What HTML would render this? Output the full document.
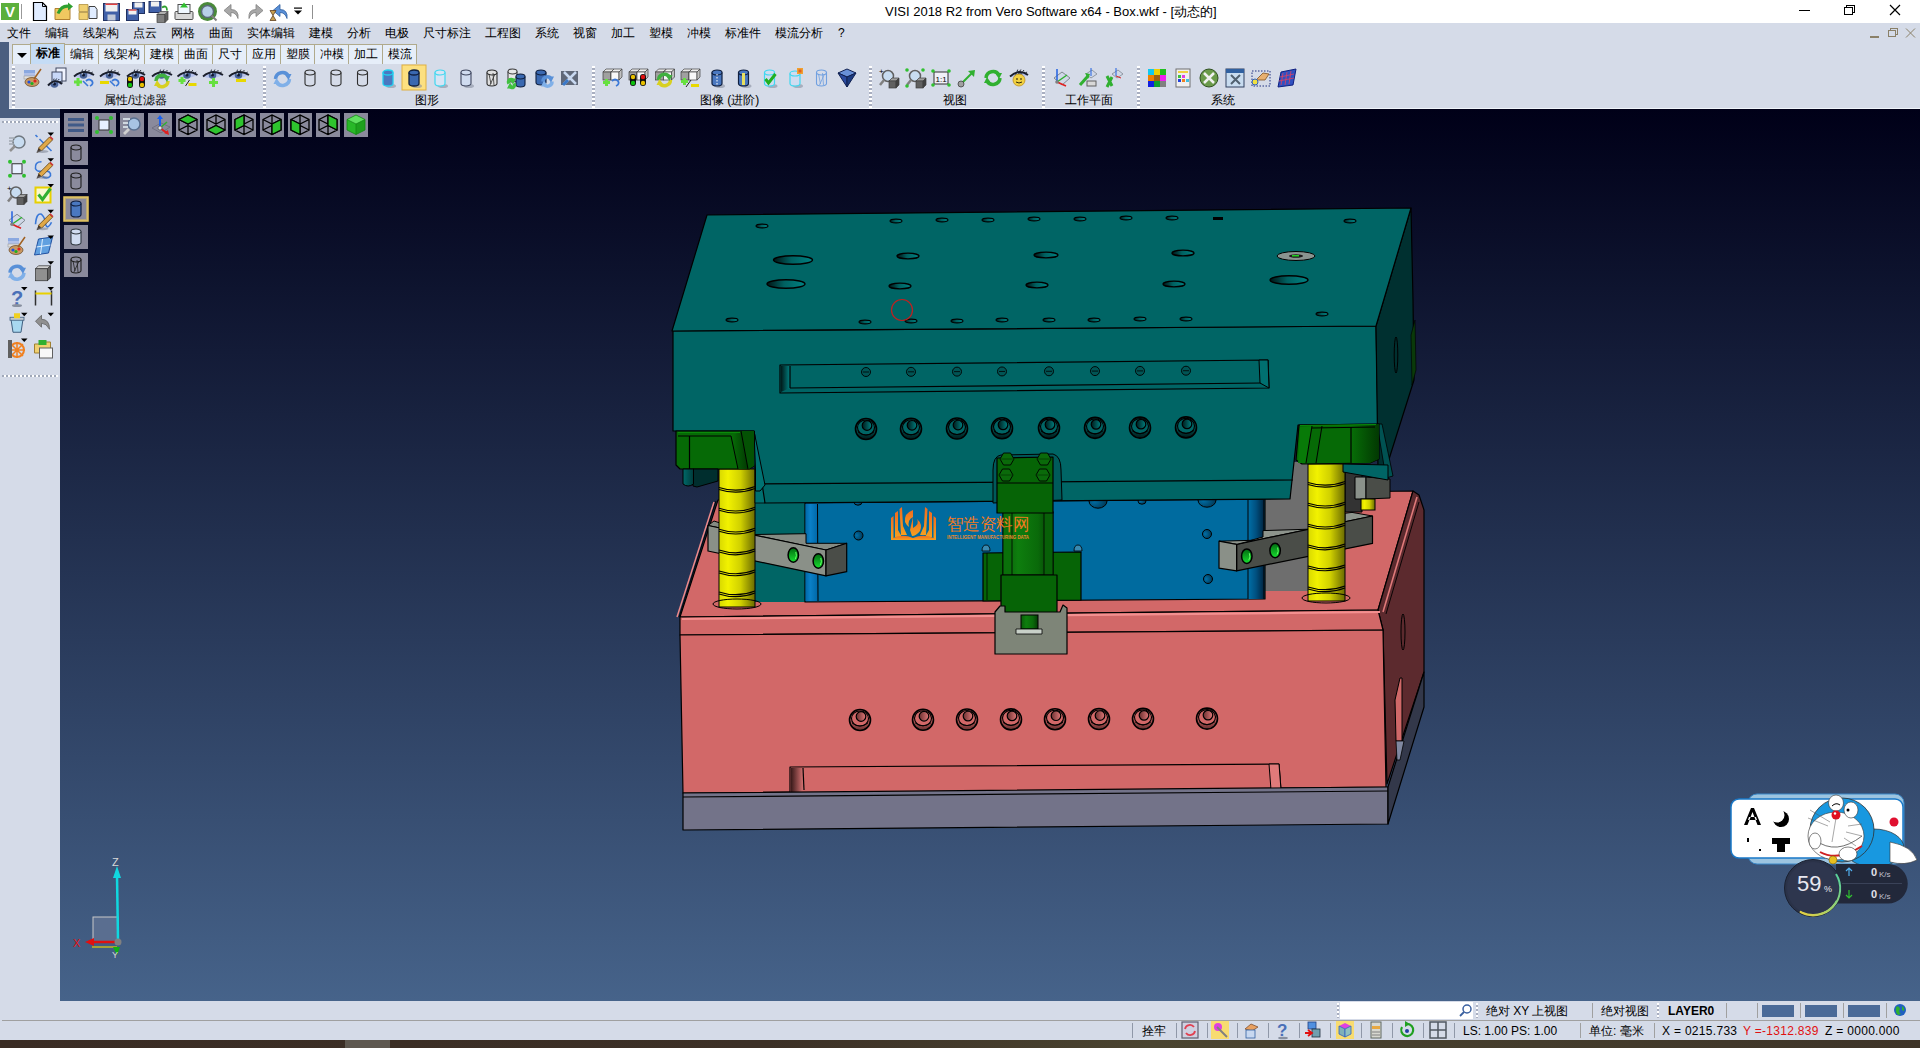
<!DOCTYPE html>
<html><head><meta charset="utf-8">
<style>
*{margin:0;padding:0;box-sizing:border-box}
html,body{width:1920px;height:1048px;overflow:hidden;background:#D5DBE8;font-family:"Liberation Sans",sans-serif;font-size:12px;color:#000}
.a{position:absolute}
#title{left:0;top:0;width:1920px;height:23px;background:#fff}
#ttl{position:absolute;left:885px;top:4px;font-size:13px;line-height:15px;white-space:nowrap;color:#000}
.mi{position:absolute;top:25.5px;font-size:12px;line-height:15px;white-space:nowrap}
.tab{position:absolute;top:44px;height:20px;background:#E6EEF9;border:1px solid #B0AA8C;border-bottom:none;font-size:12px;line-height:18px;text-align:center;white-space:nowrap}
#vp{left:60px;top:109px;width:1860px;height:892px;background:linear-gradient(#000018,#46638A)}
.lbl{position:absolute;top:93px;font-size:12px;line-height:15px;white-space:nowrap}
.sep{position:absolute;top:66px;width:3px;height:42px;background-image:repeating-linear-gradient(#fff 0 2px,#A8AEC0 2px 4px)}
.vb{position:absolute;width:24px;height:24px;background:#85859A}
.st{position:absolute;font-size:12px;line-height:14px;white-space:nowrap}
svg{position:absolute;left:0;top:0}
</style></head><body>
<div id="title" class="a">
 <div class="a" style="left:1px;top:3px;width:18px;height:17px;background:#5CB03C;color:#fff;font-weight:bold;font-size:15px;line-height:17px;text-align:center">V</div>
 <div class="a" style="left:21px;top:4px;width:1px;height:15px;background:#999"></div>
 <div id="ttl">VISI 2018 R2 from Vero Software x64 - Box.wkf - [动态的]</div>
 <div class="a" style="left:1799px;top:10px;width:11px;height:1px;background:#000"></div>
 <div class="a" style="left:1846px;top:5px;width:9px;height:8px;border:1px solid #000;background:#fff"></div>
 <div class="a" style="left:1844px;top:7px;width:9px;height:8px;border:1px solid #000;background:#fff"></div>
 <svg class="a" style="left:1889px;top:4px" width="12" height="12"><path d="M1,1 L11,11 M11,1 L1,11" stroke="#000" stroke-width="1.2"/></svg>
</div>
<div class="mi" style="left:7px">文件</div>
<div class="mi" style="left:45px">编辑</div>
<div class="mi" style="left:83px">线架构</div>
<div class="mi" style="left:133px">点云</div>
<div class="mi" style="left:171px">网格</div>
<div class="mi" style="left:209px">曲面</div>
<div class="mi" style="left:247px">实体编辑</div>
<div class="mi" style="left:309px">建模</div>
<div class="mi" style="left:347px">分析</div>
<div class="mi" style="left:385px">电极</div>
<div class="mi" style="left:423px">尺寸标注</div>
<div class="mi" style="left:485px">工程图</div>
<div class="mi" style="left:535px">系统</div>
<div class="mi" style="left:573px">视窗</div>
<div class="mi" style="left:611px">加工</div>
<div class="mi" style="left:649px">塑模</div>
<div class="mi" style="left:687px">冲模</div>
<div class="mi" style="left:725px">标准件</div>
<div class="mi" style="left:775px">模流分析</div>
<div class="mi" style="left:838px">?</div>
<div class="a" style="left:1870px;top:36px;width:9px;height:1.5px;background:#8A8068"></div>
<div class="a" style="left:1890px;top:28px;width:8px;height:7px;border:1px solid #8A8068"></div>
<div class="a" style="left:1888px;top:30px;width:8px;height:7px;border:1px solid #8A8068;background:#D5DBE8"></div>
<svg class="a" style="left:1905px;top:28px" width="11" height="10"><path d="M1,0.5 L10,9.5 M10,0.5 L1,9.5" stroke="#8A8068" stroke-width="1"/></svg>

<div class="a" style="left:0;top:42px;width:9px;height:76px;background:#4A5E80"></div><div class="a" style="left:0;top:109px;width:60px;height:9px;background:#4A5E80"></div>
<div class="tab" style="left:12px;width:19px"><div class="a" style="left:4px;top:8px;width:0;height:0;border-left:5px solid transparent;border-right:5px solid transparent;border-top:5px solid #000"></div></div>
<div class="tab" style="left:30px;width:35px;top:43px;height:21px;background:#C5DCF5;font-weight:bold">标准</div>
<div class="tab" style="left:64px;width:35px">编辑</div>
<div class="tab" style="left:98px;width:47px">线架构</div>
<div class="tab" style="left:144px;width:35px">建模</div>
<div class="tab" style="left:178px;width:35px">曲面</div>
<div class="tab" style="left:212px;width:35px">尺寸</div>
<div class="tab" style="left:246px;width:35px">应用</div>
<div class="tab" style="left:280px;width:35px">塑膜</div>
<div class="tab" style="left:314px;width:35px">冲模</div>
<div class="tab" style="left:348px;width:35px">加工</div>
<div class="tab" style="left:382px;width:35px">模流</div>
<div class="a" style="left:9px;top:64px;width:1911px;height:45px;background:#D5DBE8;border-bottom:1px solid #F0F4FA"></div>
<div class="sep" style="left:12px"></div>
<div class="sep" style="left:263px"></div>
<div class="sep" style="left:592px"></div>
<div class="sep" style="left:869px"></div>
<div class="sep" style="left:1042px"></div>
<div class="sep" style="left:1137px"></div>
<div class="lbl" style="left:104px">属性/过滤器</div>
<div class="lbl" style="left:415px">图形</div>
<div class="lbl" style="left:700px">图像 (进阶)</div>
<div class="lbl" style="left:943px">视图</div>
<div class="lbl" style="left:1065px">工作平面</div>
<div class="lbl" style="left:1211px">系统</div>
<div id="vp" class="a"></div>
<!--ICONS-->
<svg width="1920" height="1048" viewBox="0 0 1920 1048">
<defs><linearGradient id="yel" x1="0" x2="1"><stop offset="0" stop-color="#D8D800"/><stop offset="0.25" stop-color="#F2F200"/><stop offset="0.6" stop-color="#D0D000"/><stop offset="1" stop-color="#6A6A00"/></linearGradient><linearGradient id="grn" x1="0" x2="1"><stop offset="0" stop-color="#0A5A0A"/><stop offset="0.3" stop-color="#0E7E0E"/><stop offset="0.7" stop-color="#0A6A0A"/><stop offset="1" stop-color="#053A05"/></linearGradient><linearGradient id="wallT" x1="0" x2="1"><stop offset="0" stop-color="#001A1A"/><stop offset="1" stop-color="#008080"/></linearGradient><linearGradient id="wallP" x1="0" x2="1"><stop offset="0" stop-color="#3A1A1A"/><stop offset="1" stop-color="#E07878"/></linearGradient><linearGradient id="blueL" x1="0" x2="1"><stop offset="0" stop-color="#0068A8"/><stop offset="0.4" stop-color="#0A80C8"/><stop offset="1" stop-color="#0068A8"/></linearGradient><linearGradient id="blueR" x1="0" x2="1"><stop offset="0" stop-color="#0070A8"/><stop offset="0.5" stop-color="#005080"/><stop offset="1" stop-color="#002440"/></linearGradient><radialGradient id="bhole" cx="0.3" cy="0.5" r="0.8"><stop offset="0" stop-color="#0070A8"/><stop offset="1" stop-color="#00304A"/></radialGradient><linearGradient id="holeT" x1="0" x2="1"><stop offset="0" stop-color="#001414"/><stop offset="0.45" stop-color="#006060"/><stop offset="1" stop-color="#008282"/></linearGradient><pattern id="dots" width="4" height="2" patternUnits="userSpaceOnUse"><rect width="2" height="2" fill="#fff"/><rect x="2" width="2" height="2" fill="#A0A8B8"/></pattern><linearGradient id="gauge" x1="1" y1="0" x2="0" y2="1"><stop offset="0" stop-color="#50D0A0"/><stop offset="1" stop-color="#E8D040"/></linearGradient></defs>
<polygon points="718,500 1413,491 1378,610 680,617" fill="#D26868" stroke="#000" stroke-width="1.2" stroke-linejoin="round" />
<line x1="714" y1="502" x2="677" y2="617" stroke="#F08A8A" stroke-width="1.5"/>
<line x1="716" y1="501" x2="679" y2="617" stroke="#000" stroke-width="0.9"/>
<polygon points="1378,610 1413,491 1419,495 1424,510 1424,672 1387,784 1383,630" fill="#5C2A2E" stroke="#000" stroke-width="1.2" stroke-linejoin="round" />
<line x1="1383" y1="612" x2="1417" y2="497" stroke="#E07A7A" stroke-width="1.6"/>
<line x1="1386" y1="614" x2="1419" y2="502" stroke="#000" stroke-width="0.9"/>
<polygon points="1264,462 1345,462 1345,591 1264,591" fill="#6E6E6E" stroke="none" stroke-width="1.2" stroke-linejoin="round" />
<polygon points="1345,472 1362,472 1362,512 1345,512" fill="#333333" stroke="#000" stroke-width="1" stroke-linejoin="round" />
<polygon points="1355,477 1366,477 1366,499 1355,499" fill="#8A918A" stroke="#000" stroke-width="1" stroke-linejoin="round" />
<polygon points="1366,477 1390,479 1390,498 1366,499" fill="#4A4D48" stroke="#000" stroke-width="1" stroke-linejoin="round" />
<rect x="1361" y="499" width="14" height="11" fill="url(#yel)" stroke="#000" stroke-width="1"/>
<polygon points="745,500 810,500 810,602 745,602" fill="#006565" stroke="none" stroke-width="1.2" stroke-linejoin="round" />
<polygon points="805,503 1265,499 1265,599 805,602" fill="#006B9F" stroke="#000" stroke-width="1.2" stroke-linejoin="round" />
<rect x="805.5" y="504" width="12" height="97" fill="url(#blueL)"/>
<line x1="817.5" y1="504" x2="818" y2="601" stroke="#000" stroke-width="1"/>
<rect x="1248" y="500" width="16" height="99" fill="url(#blueR)"/>
<line x1="1248" y1="500" x2="1248" y2="599" stroke="#000" stroke-width="1"/>
<line x1="1264" y1="500" x2="1264" y2="599" stroke="#000" stroke-width="1"/>
<circle cx="858.5" cy="535.5" r="4.5" fill="url(#bhole)" stroke="#000" stroke-width="1"/>
<circle cx="1207" cy="534" r="4.5" fill="url(#bhole)" stroke="#000" stroke-width="1"/>
<circle cx="1208" cy="579" r="4.5" fill="url(#bhole)" stroke="#000" stroke-width="1"/>
<ellipse cx="858" cy="502" rx="4" ry="3.2" fill="url(#bhole)" stroke="#000" stroke-width="1"/>
<ellipse cx="1098" cy="501" rx="9" ry="7.2" fill="url(#bhole)" stroke="#000" stroke-width="1"/>
<ellipse cx="1142" cy="501" rx="4" ry="3.2" fill="url(#bhole)" stroke="#000" stroke-width="1"/>
<ellipse cx="1207" cy="500" rx="9" ry="7.2" fill="url(#bhole)" stroke="#000" stroke-width="1"/>
<polygon points="680,617 1378,610 1383,630 680,635" fill="#D26868" stroke="#000" stroke-width="1.2" stroke-linejoin="round" />
<line x1="682" y1="619" x2="1380" y2="612" stroke="#F49090" stroke-width="2.2"/>
<polygon points="680,635 1383,630 1386,787 683,793" fill="#D26868" stroke="#000" stroke-width="1.2" stroke-linejoin="round" />
<polygon points="790,767 1279,764 1281,790 790,796" fill="#D26868" stroke="#000" stroke-width="1.2" stroke-linejoin="round" />
<polygon points="791,768 803,768 804,790 791,795" fill="url(#wallP)"/>
<line x1="803" y1="768" x2="804" y2="790" stroke="#000" stroke-width="1.2"/>
<polygon points="1269,764 1279,764 1281,790 1271,790" fill="#E07A7A" stroke="#000" stroke-width="1" stroke-linejoin="round" />
<polygon points="683,793 1386,787 1388,787 1388,824 683,830" fill="#737389" stroke="#000" stroke-width="1.2" stroke-linejoin="round" />
<line x1="683" y1="797" x2="1388" y2="791" stroke="#000" stroke-width="1.2"/>
<polygon points="1388,787 1424,672 1424,707 1388,824" fill="#33384A" stroke="#000" stroke-width="1.2" stroke-linejoin="round" />
<polygon points="1395,700 1400,678 1402,678 1402,741 1396,741" fill="#D06868" stroke="#000" stroke-width="1" stroke-linejoin="round" />
<polygon points="1396,741 1404,741 1400,760 1397,760" fill="#8088A0" stroke="#000" stroke-width="0.8" stroke-linejoin="round" />
<ellipse cx="1403" cy="632" rx="2" ry="18" fill="none" stroke="#000" stroke-width="1"/>
<linearGradient id="scrPv" x1="0" y1="0" x2="0" y2="1"><stop offset="0.35" stop-color="#D26868"/><stop offset="1" stop-color="#6A3030"/></linearGradient><linearGradient id="scrPh" x1="0" x2="1"><stop offset="0" stop-color="#6A3030"/><stop offset="1" stop-color="#E07878"/></linearGradient><linearGradient id="scrTv" x1="0" y1="0" x2="0" y2="1"><stop offset="0.35" stop-color="#006464"/><stop offset="1" stop-color="#001A1A"/></linearGradient><linearGradient id="scrTh" x1="0" x2="1"><stop offset="0" stop-color="#001A1A"/><stop offset="1" stop-color="#008080"/></linearGradient>
<circle cx="860" cy="720.0" r="10.5" fill="url(#scrPv)" stroke="#000" stroke-width="1.6"/>
<ellipse cx="860" cy="718.5" rx="8.5" ry="7.5" fill="#D26868" stroke="#000" stroke-width="1.1"/>
<path d="M852,723.0 Q860,729.0 868,723.0" fill="none" stroke="#000" stroke-width="0.9"/>
<circle cx="861" cy="716.5" r="4.8" fill="url(#scrPh)" stroke="#000" stroke-width="1.2"/>
<circle cx="923" cy="719.748" r="10.5" fill="url(#scrPv)" stroke="#000" stroke-width="1.6"/>
<ellipse cx="923" cy="718.248" rx="8.5" ry="7.5" fill="#D26868" stroke="#000" stroke-width="1.1"/>
<path d="M915,722.748 Q923,728.748 931,722.748" fill="none" stroke="#000" stroke-width="0.9"/>
<circle cx="924" cy="716.248" r="4.8" fill="url(#scrPh)" stroke="#000" stroke-width="1.2"/>
<circle cx="967" cy="719.572" r="10.5" fill="url(#scrPv)" stroke="#000" stroke-width="1.6"/>
<ellipse cx="967" cy="718.072" rx="8.5" ry="7.5" fill="#D26868" stroke="#000" stroke-width="1.1"/>
<path d="M959,722.572 Q967,728.572 975,722.572" fill="none" stroke="#000" stroke-width="0.9"/>
<circle cx="968" cy="716.072" r="4.8" fill="url(#scrPh)" stroke="#000" stroke-width="1.2"/>
<circle cx="1011" cy="719.396" r="10.5" fill="url(#scrPv)" stroke="#000" stroke-width="1.6"/>
<ellipse cx="1011" cy="717.896" rx="8.5" ry="7.5" fill="#D26868" stroke="#000" stroke-width="1.1"/>
<path d="M1003,722.396 Q1011,728.396 1019,722.396" fill="none" stroke="#000" stroke-width="0.9"/>
<circle cx="1012" cy="715.896" r="4.8" fill="url(#scrPh)" stroke="#000" stroke-width="1.2"/>
<circle cx="1055" cy="719.22" r="10.5" fill="url(#scrPv)" stroke="#000" stroke-width="1.6"/>
<ellipse cx="1055" cy="717.72" rx="8.5" ry="7.5" fill="#D26868" stroke="#000" stroke-width="1.1"/>
<path d="M1047,722.22 Q1055,728.22 1063,722.22" fill="none" stroke="#000" stroke-width="0.9"/>
<circle cx="1056" cy="715.72" r="4.8" fill="url(#scrPh)" stroke="#000" stroke-width="1.2"/>
<circle cx="1099" cy="719.044" r="10.5" fill="url(#scrPv)" stroke="#000" stroke-width="1.6"/>
<ellipse cx="1099" cy="717.544" rx="8.5" ry="7.5" fill="#D26868" stroke="#000" stroke-width="1.1"/>
<path d="M1091,722.044 Q1099,728.044 1107,722.044" fill="none" stroke="#000" stroke-width="0.9"/>
<circle cx="1100" cy="715.544" r="4.8" fill="url(#scrPh)" stroke="#000" stroke-width="1.2"/>
<circle cx="1143" cy="718.868" r="10.5" fill="url(#scrPv)" stroke="#000" stroke-width="1.6"/>
<ellipse cx="1143" cy="717.368" rx="8.5" ry="7.5" fill="#D26868" stroke="#000" stroke-width="1.1"/>
<path d="M1135,721.868 Q1143,727.868 1151,721.868" fill="none" stroke="#000" stroke-width="0.9"/>
<circle cx="1144" cy="715.368" r="4.8" fill="url(#scrPh)" stroke="#000" stroke-width="1.2"/>
<circle cx="1207" cy="718.612" r="10.5" fill="url(#scrPv)" stroke="#000" stroke-width="1.6"/>
<ellipse cx="1207" cy="717.112" rx="8.5" ry="7.5" fill="#D26868" stroke="#000" stroke-width="1.1"/>
<path d="M1199,721.612 Q1207,727.612 1215,721.612" fill="none" stroke="#000" stroke-width="0.9"/>
<circle cx="1208" cy="715.112" r="4.8" fill="url(#scrPh)" stroke="#000" stroke-width="1.2"/>
<linearGradient id="ghole" x1="0" y1="0" x2="0" y2="1"><stop offset="0" stop-color="#006A10"/><stop offset="1" stop-color="#18E030"/></linearGradient>
<polygon points="708,525.5 714,521 755,534.5 806,533.7 806,543.3 846.7,543.3 826,550" fill="#858B83" stroke="#000" stroke-width="1" stroke-linejoin="round" />
<polygon points="708,525.5 826,550 826,575.8 708,551" fill="#8A9088" stroke="#000" stroke-width="1.2" stroke-linejoin="round" />
<polygon points="826,550 846.7,543.3 846.7,571.7 826,575.8" fill="#4A4D48" stroke="#000" stroke-width="1.2" stroke-linejoin="round" />
<ellipse cx="793.3" cy="555" rx="5.2" ry="7.3" fill="url(#ghole)" stroke="#000" stroke-width="1.5"/>
<path d="M795.8,552 Q797.3,556 795.3,559" fill="none" stroke="#60FF60" stroke-width="1"/>
<ellipse cx="818.3" cy="561" rx="5.2" ry="7.3" fill="url(#ghole)" stroke="#000" stroke-width="1.5"/>
<path d="M820.8,558 Q822.3,562 820.3,565" fill="none" stroke="#60FF60" stroke-width="1"/>
<polygon points="1236.6,544.3 1263,537 1263,530.6 1309,529.2 1345,520.8 1345,513.3 1352,512.4 1372.5,516" fill="#8D948C" stroke="#000" stroke-width="1" stroke-linejoin="round" />
<polygon points="1236.6,544.3 1372.5,516 1372.5,543.4 1236.6,570.9" fill="#4A4D48" stroke="#000" stroke-width="1.2" stroke-linejoin="round" />
<polygon points="1219,541.2 1253,540.3 1236.6,544.3" fill="#8D948C" stroke="#000" stroke-width="1" stroke-linejoin="round" />
<polygon points="1219,541.2 1236.6,544.3 1236.6,570.9 1219,568.2" fill="#8A9088" stroke="#000" stroke-width="1.2" stroke-linejoin="round" />
<ellipse cx="1246.8" cy="556.2" rx="5.2" ry="7.3" fill="url(#ghole)" stroke="#000" stroke-width="1.5"/>
<path d="M1249.3,553.2 Q1250.8,557.2 1248.8,560.2" fill="none" stroke="#60FF60" stroke-width="1"/>
<ellipse cx="1275.1" cy="550.5" rx="5.2" ry="7.3" fill="url(#ghole)" stroke="#000" stroke-width="1.5"/>
<path d="M1277.6,547.5 Q1279.1,551.5 1277.1,554.5" fill="none" stroke="#60FF60" stroke-width="1"/>
<rect x="719" y="469" width="36" height="138" fill="url(#yel)" stroke="#000" stroke-width="1"/>
<path d="M719,487.4 Q737.0,493.4 755,486.4" fill="none" stroke="#000" stroke-width="1.1"/>
<path d="M719,489.4 Q737.0,495.4 755,488.4" fill="none" stroke="#000" stroke-width="1.1"/>
<path d="M719,508.3 Q737.0,514.3 755,507.3" fill="none" stroke="#000" stroke-width="1.1"/>
<path d="M719,510.3 Q737.0,516.3 755,509.3" fill="none" stroke="#000" stroke-width="1.1"/>
<path d="M719,529.2 Q737.0,535.2 755,528.2" fill="none" stroke="#000" stroke-width="1.1"/>
<path d="M719,531.2 Q737.0,537.2 755,530.2" fill="none" stroke="#000" stroke-width="1.1"/>
<path d="M719,550.1 Q737.0,556.1 755,549.1" fill="none" stroke="#000" stroke-width="1.1"/>
<path d="M719,552.1 Q737.0,558.1 755,551.1" fill="none" stroke="#000" stroke-width="1.1"/>
<path d="M719,571.0 Q737.0,577.0 755,570.0" fill="none" stroke="#000" stroke-width="1.1"/>
<path d="M719,573.0 Q737.0,579.0 755,572.0" fill="none" stroke="#000" stroke-width="1.1"/>
<path d="M719,591.9 Q737.0,597.9 755,590.9" fill="none" stroke="#000" stroke-width="1.1"/>
<path d="M719,593.9 Q737.0,599.9 755,592.9" fill="none" stroke="#000" stroke-width="1.1"/>
<rect x="1308" y="464" width="37" height="137" fill="url(#yel)" stroke="#000" stroke-width="1"/>
<path d="M1308,482.4 Q1326.5,488.4 1345,481.4" fill="none" stroke="#000" stroke-width="1.1"/>
<path d="M1308,484.4 Q1326.5,490.4 1345,483.4" fill="none" stroke="#000" stroke-width="1.1"/>
<path d="M1308,503.3 Q1326.5,509.3 1345,502.3" fill="none" stroke="#000" stroke-width="1.1"/>
<path d="M1308,505.3 Q1326.5,511.3 1345,504.3" fill="none" stroke="#000" stroke-width="1.1"/>
<path d="M1308,524.2 Q1326.5,530.2 1345,523.2" fill="none" stroke="#000" stroke-width="1.1"/>
<path d="M1308,526.2 Q1326.5,532.2 1345,525.2" fill="none" stroke="#000" stroke-width="1.1"/>
<path d="M1308,545.1 Q1326.5,551.1 1345,544.1" fill="none" stroke="#000" stroke-width="1.1"/>
<path d="M1308,547.1 Q1326.5,553.1 1345,546.1" fill="none" stroke="#000" stroke-width="1.1"/>
<path d="M1308,566.0 Q1326.5,572.0 1345,565.0" fill="none" stroke="#000" stroke-width="1.1"/>
<path d="M1308,568.0 Q1326.5,574.0 1345,567.0" fill="none" stroke="#000" stroke-width="1.1"/>
<path d="M1308,586.9 Q1326.5,592.9 1345,585.9" fill="none" stroke="#000" stroke-width="1.1"/>
<path d="M1308,588.9 Q1326.5,594.9 1345,587.9" fill="none" stroke="#000" stroke-width="1.1"/>
<ellipse cx="737" cy="604" rx="24" ry="5" fill="none" stroke="#000" stroke-width="1"/>
<ellipse cx="1326" cy="598" rx="24" ry="5" fill="none" stroke="#000" stroke-width="1"/>
<polygon points="745,431 757,431 766,484 765,503 755,503 755,469" fill="#007070" stroke="#000" stroke-width="0.8" stroke-linejoin="round" />
<polygon points="673,331 1376,326 1378,424 1298,425 1290,499 765,503 754,431 673,431" fill="#006565" stroke="#000" stroke-width="1.2" stroke-linejoin="round" />
<line x1="758" y1="484" x2="1293" y2="480" stroke="#000" stroke-width="1.2"/>
<polygon points="1376,326 1411,208 1413,300 1414,380 1384,475 1378,470" fill="#003030" stroke="#000" stroke-width="1.2" stroke-linejoin="round" />
<polygon points="707,215 1411,208 1376,326 672,331" fill="#006565" stroke="#000" stroke-width="1.2" stroke-linejoin="round" />
<ellipse cx="1396" cy="355" rx="1.8" ry="18" fill="none" stroke="#000" stroke-width="1"/>
<polygon points="1411,335 1415,320 1416,370 1412,385" fill="#0A3A0A" stroke="#000" stroke-width="0.6" stroke-linejoin="round" />
<polygon points="1377,424 1382,424 1393,476 1386,478" fill="#005252" stroke="#000" stroke-width="0.8" stroke-linejoin="round" />
<polygon points="780,365 1268,360 1269,388 780,393" fill="#006565" stroke="#000" stroke-width="1.2" stroke-linejoin="round" />
<polygon points="781,366 790,366 790,388 781,392" fill="url(#wallT)"/>
<line x1="790" y1="366" x2="790" y2="388" stroke="#000" stroke-width="1.2"/>
<line x1="790" y1="388" x2="1262" y2="383" stroke="#000" stroke-width="1.2"/>
<polygon points="1259,360 1268,360 1269,388 1260,383" fill="#007070" stroke="#000" stroke-width="1" stroke-linejoin="round" />
<circle cx="866" cy="372.0" r="4.5" fill="#005555" stroke="#000" stroke-width="0.9"/>
<line x1="863" y1="372.0" x2="869" y2="372.0" stroke="#000" stroke-width="0.8"/>
<circle cx="911" cy="371.82" r="4.5" fill="#005555" stroke="#000" stroke-width="0.9"/>
<line x1="908" y1="371.82" x2="914" y2="371.82" stroke="#000" stroke-width="0.8"/>
<circle cx="957" cy="371.636" r="4.5" fill="#005555" stroke="#000" stroke-width="0.9"/>
<line x1="954" y1="371.636" x2="960" y2="371.636" stroke="#000" stroke-width="0.8"/>
<circle cx="1002" cy="371.456" r="4.5" fill="#005555" stroke="#000" stroke-width="0.9"/>
<line x1="999" y1="371.456" x2="1005" y2="371.456" stroke="#000" stroke-width="0.8"/>
<circle cx="1049" cy="371.268" r="4.5" fill="#005555" stroke="#000" stroke-width="0.9"/>
<line x1="1046" y1="371.268" x2="1052" y2="371.268" stroke="#000" stroke-width="0.8"/>
<circle cx="1095" cy="371.084" r="4.5" fill="#005555" stroke="#000" stroke-width="0.9"/>
<line x1="1092" y1="371.084" x2="1098" y2="371.084" stroke="#000" stroke-width="0.8"/>
<circle cx="1140" cy="370.904" r="4.5" fill="#005555" stroke="#000" stroke-width="0.9"/>
<line x1="1137" y1="370.904" x2="1143" y2="370.904" stroke="#000" stroke-width="0.8"/>
<circle cx="1186" cy="370.72" r="4.5" fill="#005555" stroke="#000" stroke-width="0.9"/>
<line x1="1183" y1="370.72" x2="1189" y2="370.72" stroke="#000" stroke-width="0.8"/>
<circle cx="866" cy="429.0" r="10.5" fill="url(#scrTv)" stroke="#000" stroke-width="1.6"/>
<ellipse cx="866" cy="427.5" rx="8.5" ry="7.5" fill="#006565" stroke="#000" stroke-width="1.1"/>
<path d="M858,432.0 Q866,438.0 874,432.0" fill="none" stroke="#000" stroke-width="0.9"/>
<circle cx="867" cy="425.5" r="4.8" fill="url(#scrTh)" stroke="#000" stroke-width="1.2"/>
<circle cx="911" cy="428.775" r="10.5" fill="url(#scrTv)" stroke="#000" stroke-width="1.6"/>
<ellipse cx="911" cy="427.275" rx="8.5" ry="7.5" fill="#006565" stroke="#000" stroke-width="1.1"/>
<path d="M903,431.775 Q911,437.775 919,431.775" fill="none" stroke="#000" stroke-width="0.9"/>
<circle cx="912" cy="425.275" r="4.8" fill="url(#scrTh)" stroke="#000" stroke-width="1.2"/>
<circle cx="957" cy="428.545" r="10.5" fill="url(#scrTv)" stroke="#000" stroke-width="1.6"/>
<ellipse cx="957" cy="427.045" rx="8.5" ry="7.5" fill="#006565" stroke="#000" stroke-width="1.1"/>
<path d="M949,431.545 Q957,437.545 965,431.545" fill="none" stroke="#000" stroke-width="0.9"/>
<circle cx="958" cy="425.045" r="4.8" fill="url(#scrTh)" stroke="#000" stroke-width="1.2"/>
<circle cx="1002" cy="428.32" r="10.5" fill="url(#scrTv)" stroke="#000" stroke-width="1.6"/>
<ellipse cx="1002" cy="426.82" rx="8.5" ry="7.5" fill="#006565" stroke="#000" stroke-width="1.1"/>
<path d="M994,431.32 Q1002,437.32 1010,431.32" fill="none" stroke="#000" stroke-width="0.9"/>
<circle cx="1003" cy="424.82" r="4.8" fill="url(#scrTh)" stroke="#000" stroke-width="1.2"/>
<circle cx="1049" cy="428.085" r="10.5" fill="url(#scrTv)" stroke="#000" stroke-width="1.6"/>
<ellipse cx="1049" cy="426.585" rx="8.5" ry="7.5" fill="#006565" stroke="#000" stroke-width="1.1"/>
<path d="M1041,431.085 Q1049,437.085 1057,431.085" fill="none" stroke="#000" stroke-width="0.9"/>
<circle cx="1050" cy="424.585" r="4.8" fill="url(#scrTh)" stroke="#000" stroke-width="1.2"/>
<circle cx="1095" cy="427.855" r="10.5" fill="url(#scrTv)" stroke="#000" stroke-width="1.6"/>
<ellipse cx="1095" cy="426.355" rx="8.5" ry="7.5" fill="#006565" stroke="#000" stroke-width="1.1"/>
<path d="M1087,430.855 Q1095,436.855 1103,430.855" fill="none" stroke="#000" stroke-width="0.9"/>
<circle cx="1096" cy="424.355" r="4.8" fill="url(#scrTh)" stroke="#000" stroke-width="1.2"/>
<circle cx="1140" cy="427.63" r="10.5" fill="url(#scrTv)" stroke="#000" stroke-width="1.6"/>
<ellipse cx="1140" cy="426.13" rx="8.5" ry="7.5" fill="#006565" stroke="#000" stroke-width="1.1"/>
<path d="M1132,430.63 Q1140,436.63 1148,430.63" fill="none" stroke="#000" stroke-width="0.9"/>
<circle cx="1141" cy="424.13" r="4.8" fill="url(#scrTh)" stroke="#000" stroke-width="1.2"/>
<circle cx="1186" cy="427.4" r="10.5" fill="url(#scrTv)" stroke="#000" stroke-width="1.6"/>
<ellipse cx="1186" cy="425.9" rx="8.5" ry="7.5" fill="#006565" stroke="#000" stroke-width="1.1"/>
<path d="M1178,430.4 Q1186,436.4 1194,430.4" fill="none" stroke="#000" stroke-width="0.9"/>
<circle cx="1187" cy="423.9" r="4.8" fill="url(#scrTh)" stroke="#000" stroke-width="1.2"/>
<ellipse cx="762" cy="226" rx="6" ry="1.9" fill="url(#holeT)" stroke="#000" stroke-width="1.1"/>
<ellipse cx="896" cy="221" rx="6" ry="1.9" fill="url(#holeT)" stroke="#000" stroke-width="1.1"/>
<ellipse cx="942" cy="220" rx="6" ry="1.9" fill="url(#holeT)" stroke="#000" stroke-width="1.1"/>
<ellipse cx="988" cy="220" rx="6" ry="1.9" fill="url(#holeT)" stroke="#000" stroke-width="1.1"/>
<ellipse cx="1034" cy="219" rx="6" ry="1.9" fill="url(#holeT)" stroke="#000" stroke-width="1.1"/>
<ellipse cx="1080" cy="219" rx="6" ry="1.9" fill="url(#holeT)" stroke="#000" stroke-width="1.1"/>
<ellipse cx="1126" cy="218" rx="6" ry="1.9" fill="url(#holeT)" stroke="#000" stroke-width="1.1"/>
<ellipse cx="1172" cy="218" rx="6" ry="1.9" fill="url(#holeT)" stroke="#000" stroke-width="1.1"/>
<ellipse cx="1350" cy="221" rx="6" ry="1.9" fill="url(#holeT)" stroke="#000" stroke-width="1.1"/>
<ellipse cx="732" cy="320" rx="6" ry="1.9" fill="url(#holeT)" stroke="#000" stroke-width="1.1"/>
<ellipse cx="865" cy="322" rx="6" ry="1.9" fill="url(#holeT)" stroke="#000" stroke-width="1.1"/>
<ellipse cx="911" cy="321" rx="6" ry="1.9" fill="url(#holeT)" stroke="#000" stroke-width="1.1"/>
<ellipse cx="957" cy="321" rx="6" ry="1.9" fill="url(#holeT)" stroke="#000" stroke-width="1.1"/>
<ellipse cx="1002" cy="320" rx="6" ry="1.9" fill="url(#holeT)" stroke="#000" stroke-width="1.1"/>
<ellipse cx="1049" cy="320" rx="6" ry="1.9" fill="url(#holeT)" stroke="#000" stroke-width="1.1"/>
<ellipse cx="1094" cy="320" rx="6" ry="1.9" fill="url(#holeT)" stroke="#000" stroke-width="1.1"/>
<ellipse cx="1140" cy="319" rx="6" ry="1.9" fill="url(#holeT)" stroke="#000" stroke-width="1.1"/>
<ellipse cx="1186" cy="319" rx="6" ry="1.9" fill="url(#holeT)" stroke="#000" stroke-width="1.1"/>
<ellipse cx="1322" cy="314" rx="6" ry="1.9" fill="url(#holeT)" stroke="#000" stroke-width="1.1"/>
<rect x="1213" y="217" width="10" height="3" fill="#000"/>
<ellipse cx="793" cy="260" rx="19.5" ry="4.2" fill="url(#holeT)" stroke="#000" stroke-width="1.4"/>
<ellipse cx="786" cy="284" rx="19" ry="4.2" fill="url(#holeT)" stroke="#000" stroke-width="1.4"/>
<ellipse cx="908" cy="256" rx="11" ry="2.9" fill="url(#holeT)" stroke="#000" stroke-width="1.4"/>
<ellipse cx="900" cy="286" rx="11" ry="2.9" fill="url(#holeT)" stroke="#000" stroke-width="1.4"/>
<ellipse cx="1046" cy="255" rx="12" ry="2.9" fill="url(#holeT)" stroke="#000" stroke-width="1.4"/>
<ellipse cx="1037" cy="285" rx="11" ry="2.9" fill="url(#holeT)" stroke="#000" stroke-width="1.4"/>
<ellipse cx="1183" cy="253" rx="11" ry="2.9" fill="url(#holeT)" stroke="#000" stroke-width="1.4"/>
<ellipse cx="1174" cy="284" rx="11" ry="2.9" fill="url(#holeT)" stroke="#000" stroke-width="1.4"/>
<ellipse cx="1289" cy="280" rx="19" ry="4.2" fill="url(#holeT)" stroke="#000" stroke-width="1.4"/>
<ellipse cx="1296" cy="256" rx="19" ry="4.5" fill="#8A9490" stroke="#000" stroke-width="1"/>
<ellipse cx="1296" cy="256" rx="7" ry="1.8" fill="#1A1A1A"/><rect x="1292" y="255" width="7" height="1.5" fill="#20D020"/>
<circle cx="902" cy="310" r="10.5" fill="none" stroke="#C02020" stroke-width="1.2"/>
<linearGradient id="gdk" x1="0" x2="1"><stop offset="0" stop-color="#077007"/><stop offset="1" stop-color="#023802"/></linearGradient>
<polygon points="754,431 765,485 760,491 755.5,491 755.5,469" fill="#007272" stroke="#000" stroke-width="1" stroke-linejoin="round" />
<polygon points="676,431 754,431 754,466 749,469 680,469 676,465" fill="#066A06" stroke="#000" stroke-width="1.2" stroke-linejoin="round" />
<polygon points="731,436 741,431 748,469 738,469" fill="url(#gdk)"/>
<polygon points="741,431 754,431 754,466 749,469 748,469" fill="#045204"/>
<line x1="731" y1="436" x2="738" y2="469" stroke="#000" stroke-width="1"/>
<line x1="741" y1="431" x2="748" y2="469" stroke="#000" stroke-width="1"/>
<line x1="678" y1="436" x2="731" y2="436" stroke="#000" stroke-width="1"/>
<line x1="678" y1="432.5" x2="740" y2="432.5" stroke="#0A8A0A" stroke-width="1.2"/>
<line x1="689.5" y1="436" x2="689.5" y2="469" stroke="#000" stroke-width="1.2"/>
<polygon points="693,469 718,469 718,481 697,487 693,486" fill="#002E2E" stroke="#000" stroke-width="1" stroke-linejoin="round" />
<linearGradient id="tcy" x1="0" x2="1"><stop offset="0" stop-color="#006A6A"/><stop offset="1" stop-color="#003A3A"/></linearGradient>
<path d="M683,469 L693.5,469 L693.5,484 Q688,488 683,484Z" fill="url(#tcy)" stroke="#000" stroke-width="1"/>
<polygon points="1299,425 1379,424 1379,459 1370,463 1302,464 1296,460" fill="#066A06" stroke="#000" stroke-width="1.2" stroke-linejoin="round" />
<polygon points="1300,427 1312,426 1306,463 1298,463" fill="#087A08"/>
<line x1="1312" y1="426" x2="1306" y2="463" stroke="#000" stroke-width="1"/>
<line x1="1322" y1="426" x2="1316" y2="463" stroke="#000" stroke-width="1"/>
<polygon points="1350,425 1379,424 1379,459 1370,463 1350,463" fill="url(#gdk)"/>
<line x1="1351" y1="427" x2="1351" y2="463" stroke="#000" stroke-width="1.2"/>
<line x1="1312" y1="428" x2="1375" y2="427" stroke="#000" stroke-width="1"/>
<line x1="1300" y1="425.5" x2="1376" y2="424.5" stroke="#0A8A0A" stroke-width="1.2"/>
<polygon points="1343,464 1388,465 1388,480 1343,472" fill="#006565" stroke="#000" stroke-width="1" stroke-linejoin="round" />
<path d="M993,503 L993,470 Q993,456 1001,455 L1053,454 Q1061,456 1061,470 L1062,500 Z" fill="#005A5A" stroke="#000" stroke-width="1"/>
<polygon points="983,553 1081,552 1081,600 983,601" fill="#066406" stroke="#000" stroke-width="1.2" stroke-linejoin="round" />
<line x1="987" y1="553" x2="987" y2="600" stroke="#000" stroke-width="0.8"/>
<path d="M982,551 Q982,545 986,545 Q990,545 990,551Z" fill="#3A8AB0" stroke="#000" stroke-width="0.8"/>
<path d="M1074,551 Q1074,545 1078,545 Q1082,545 1082,551Z" fill="#3A8AB0" stroke="#000" stroke-width="0.8"/>
<rect x="1003" y="512" width="50" height="63" fill="url(#grn)" stroke="#000" stroke-width="1"/>
<rect x="1003" y="512" width="9" height="63" fill="#0A700A" stroke="#000" stroke-width="0.8"/>
<rect x="1044" y="512" width="9" height="63" fill="#086008" stroke="#000" stroke-width="0.8"/>
<polygon points="997,458 1053,457 1053,513 997,513" fill="#066406" stroke="#000" stroke-width="1.2" stroke-linejoin="round" />
<line x1="997" y1="483" x2="1053" y2="483" stroke="#000" stroke-width="1.2"/>
<polygon points="1000,459 1003.5,453 1010.5,453 1014,459 1010.5,465 1003.5,465" fill="#0A6A0A" stroke="#000" stroke-width="0.9"/>
<line x1="1000" y1="459" x2="1014" y2="459" stroke="#043A04" stroke-width="0.8"/>
<polygon points="1037,459 1040.5,453 1047.5,453 1051,459 1047.5,465 1040.5,465" fill="#0A6A0A" stroke="#000" stroke-width="0.9"/>
<line x1="1037" y1="459" x2="1051" y2="459" stroke="#043A04" stroke-width="0.8"/>
<polygon points="999,475 1002.5,469 1009.5,469 1013,475 1009.5,481 1002.5,481" fill="#0A6A0A" stroke="#000" stroke-width="0.9"/>
<line x1="999" y1="475" x2="1013" y2="475" stroke="#043A04" stroke-width="0.8"/>
<polygon points="1036,475 1039.5,469 1046.5,469 1050,475 1046.5,481 1039.5,481" fill="#0A6A0A" stroke="#000" stroke-width="0.9"/>
<line x1="1036" y1="475" x2="1050" y2="475" stroke="#043A04" stroke-width="0.8"/>
<polygon points="1001,575 1057,575 1057,615 1001,615" fill="#066406" stroke="#000" stroke-width="1.2" stroke-linejoin="round" />
<polygon points="995,612 1000,606 1005,606 1005,612 1060,612 1063,605 1067,608 1067,654 995,654" fill="#7E8578" stroke="#000" stroke-width="1.2" stroke-linejoin="round" />
<rect x="1021" y="615" width="17" height="14" fill="url(#grn)" stroke="#000" stroke-width="1"/>
<polygon points="1016,629 1042,629 1042,634 1016,634" fill="#C8D0C8" stroke="#000" stroke-width="0.8" stroke-linejoin="round" />
<defs><linearGradient id="og" x1="0" y1="0" x2="0" y2="1"><stop offset="0" stop-color="#F06A20"/><stop offset="1" stop-color="#F4A020"/></linearGradient></defs>
<g fill="url(#og)"><polygon points="891,518 893.5,516 893.5,539 891,539"/><polygon points="895,513 898,511 898,530 902,537 895,537"/><polygon points="899.5,509 902,507 903,526 907,535 901,535"/><polygon points="936,518 933.5,516 933.5,539 936,539"/><polygon points="932,513 929,511 929,530 925,537 932,537"/><polygon points="927.5,509 925,507 924,526 920,535 926,535"/><path d="M913,510 Q904,513 905,522 Q907,526 909,527 Q907,520 913,517Z"/><path d="M913,517 L913,528 Q920,524 917,519 Q923,524 920,531 Q916,536 912,536 L910,530Z"/><path d="M891,539 Q902,533 913,538 Q924,533 936,539 L936,540 L891,540Z"/></g><text x="946.5" y="529.5" font-size="17" textLength="83" lengthAdjust="spacingAndGlyphs" fill="#F07A22" font-family="Liberation Sans, sans-serif">智造资料网</text><text x="947" y="538.5" font-size="4.6" textLength="82" lengthAdjust="spacingAndGlyphs" fill="#E88A30" font-weight="bold" font-family="Liberation Sans, sans-serif">INTELLIGENT MANUFACTURING DATA</text>
<rect x="93" y="917" width="25" height="25" fill="#5A6E90" stroke="#C8C8C8" stroke-width="1"/><line x1="118" y1="940" x2="117" y2="875" stroke="#10D8E0" stroke-width="2.5"/><polygon points="113,878 121,878 117,866" fill="#10D8E0"/><line x1="117" y1="942" x2="92" y2="942" stroke="#E01010" stroke-width="2.5"/><polygon points="94,938 94,946 85,942" fill="#E01010"/><line x1="92" y1="947" x2="117" y2="947" stroke="#E8D000" stroke-width="1.2"/><circle cx="118" cy="942" r="3.5" fill="#808080"/><polygon points="113,947 120,947 117,955" fill="#10B010"/><text x="112" y="866" font-size="11" fill="#D8D8D8" font-family="Liberation Sans, sans-serif">Z</text><text x="73" y="947" font-size="11" fill="#E01010" font-family="Liberation Sans, sans-serif">X</text><text x="112" y="958" font-size="9" fill="#D8D8D8" font-family="Liberation Sans, sans-serif">Y</text><g transform="translate(29.5,1.5)"><path d="M4,1 L13,1 L17,5 L17,19 L4,19Z" fill="#E0ECFF" stroke="#000" stroke-width="1.2"/><path d="M13,1 L13,5 L17,5" fill="none" stroke="#000" stroke-width="1"/></g>
<g transform="translate(54,1.5)"><path d="M1,7 L7,7 L9,5 L16,5 L16,18 L1,18Z" fill="#F0C860" stroke="#B08030" stroke-width="1"/><path d="M4,12 Q8,3 16,5" fill="none" stroke="#30A030" stroke-width="3"/><polygon points="14,1 19,5 14,9" fill="#30A030"/></g>
<g transform="translate(78,1.5)"><path d="M1,3 L10,3 L10,10 L1,10Z" fill="#F0D070" stroke="#B09040" stroke-width="0.8"/><path d="M1,11 L10,11 L10,18 L1,18Z" fill="#F0D070" stroke="#B09040" stroke-width="0.8"/><path d="M11,5 L17,5 L19,8 L19,17 L11,17Z" fill="#E0ECFF" stroke="#404040" stroke-width="1"/></g>
<g transform="translate(101.5,1.5)"><rect x="2" y="2" width="16" height="17" fill="#4060A8" stroke="#203060" stroke-width="1"/><rect x="4" y="2" width="12" height="8" fill="#F0F0F0"/><rect x="4" y="2" width="12" height="1.5" fill="#E04040"/><rect x="6" y="13" width="8" height="6" fill="#C0C8D8"/></g>
<g transform="translate(125.5,1.5)"><rect x="7" y="1" width="12" height="11" fill="#4060A8" stroke="#203060" stroke-width="1"/><rect x="9" y="1" width="8" height="5" fill="#F0F0F0"/><rect x="1" y="8" width="12" height="11" fill="#4060A8" stroke="#203060" stroke-width="1"/><rect x="3" y="8" width="8" height="5" fill="#F0F0F0"/><rect x="3" y="8" width="8" height="1.2" fill="#E04040"/></g>
<g transform="translate(149,1.5)"><rect x="0" y="0" width="12" height="11" fill="#4060A8" stroke="#203060" stroke-width="1"/><rect x="2" y="0" width="8" height="5" fill="#F0F0F0"/><path d="M13,6 Q18,3 18,9" fill="none" stroke="#30A030" stroke-width="1.8"/><polygon points="8,13 11,10 19,10 16,13" fill="#B0B0B0" stroke="#404040" stroke-width="0.7"/><rect x="8" y="13" width="8" height="8" fill="#808080" stroke="#404040" stroke-width="0.7"/><polygon points="16,13 19,10 19,18 16,21" fill="#606060" stroke="#404040" stroke-width="0.7"/></g>
<g transform="translate(174,1.5)"><rect x="1" y="10" width="18" height="8" rx="1" fill="#D8D8D8" stroke="#505050" stroke-width="1"/><rect x="4" y="3" width="12" height="9" fill="#F0F8FF" stroke="#505050" stroke-width="1"/><polygon points="10,1 14,6 6,6" fill="#30C030"/></g>
<g transform="translate(197.5,1.5)"><circle cx="10" cy="10" r="9.5" fill="#4A8A3A"/><circle cx="10" cy="10" r="6" fill="#B8D0E8" stroke="#5A6A7A" stroke-width="1.5"/><line x1="14" y1="14" x2="19" y2="19" stroke="#808080" stroke-width="2"/></g>
<g transform="translate(222,1.5)"><path d="M16,17 Q17,8 9,8 L9,3 L2,9 L9,15 L9,11 Q14,11 16,17Z" fill="#A8A8A8" stroke="#808080" stroke-width="0.8"/></g>
<g transform="translate(245,1.5)"><path d="M4,17 Q3,8 11,8 L11,3 L18,9 L11,15 L11,11 Q6,11 4,17Z" fill="#A8A8A8" stroke="#808080" stroke-width="0.8"/></g>
<g transform="translate(269,1.5)"><path d="M18,17 Q19,8 11,8 L11,3 L4,9 L11,15 L11,11 Q16,11 18,17Z" fill="#5A90D8" stroke="#3060A0" stroke-width="0.8"/><path d="M1,9 L7,9 L4,14 L7,19 L1,19 L4,14Z" fill="#C8A050" stroke="#604020" stroke-width="0.8"/></g>
<g transform="translate(288,1.5)"><rect x="6" y="6" width="8" height="1.2" fill="#000"/><polygon points="6,9 14,9 10,13" fill="#000"/></g>
<rect x="312" y="5" width="1" height="14" fill="#909090"/>
<g transform="translate(23,68)"><rect x="1" y="2" width="11" height="3" fill="#8AA8E0"/><rect x="1" y="5" width="11" height="3" fill="#B0C0E8"/><rect x="1" y="8" width="11" height="3" fill="#E0E0E0" stroke="#909090" stroke-width="0.5"/><ellipse cx="9" cy="14" rx="7" ry="4.5" fill="#C89860" stroke="#705030" stroke-width="0.8"/><circle cx="6" cy="14" r="1.6" fill="#2050E0"/><circle cx="9" cy="15.5" r="1.6" fill="#20B020"/><circle cx="12" cy="13" r="1.6" fill="#E02020"/><line x1="11" y1="11" x2="18" y2="1" stroke="#A06020" stroke-width="1.5"/></g>
<g transform="translate(48,68)"><rect x="8" y="0" width="10" height="13" fill="#F0F4FF" stroke="#404860" stroke-width="1"/><rect x="4" y="4" width="10" height="11" fill="#C8D8F8" stroke="#404860" stroke-width="1"/><path d="M0,17.5 Q7.0,9.5 14,16 Q7.0,21.5 0,17.5Z" fill="#B8C4EC"/><circle cx="6.5" cy="16" r="3.8" fill="#4A6498"/><circle cx="6.5" cy="16" r="1.5" fill="#101830"/><circle cx="5.2" cy="14.6" r="0.9" fill="#E0F0FF"/><path d="M0,17.5 Q7.0,9.5 14,16" fill="none" stroke="#1A1E2A" stroke-width="1.9"/><path d="M7.700000000000001,12 l1,-1.5 M9.799999999999999,12.5 l1.5,-1.5 M11.9,14 l1.8,-1 M5.6000000000000005,12.2 l0.5,-1.6" stroke="#1A1E2A" stroke-width="0.9"/></g>
<g transform="translate(74,68)"><path d="M0,8.5 Q10.0,0.5 20,7 Q10.0,12.5 0,8.5Z" fill="#B8C4EC"/><circle cx="9.5" cy="7" r="3.8" fill="#4A6498"/><circle cx="9.5" cy="7" r="1.5" fill="#101830"/><circle cx="8.2" cy="5.6" r="0.9" fill="#E0F0FF"/><path d="M0,8.5 Q10.0,0.5 20,7" fill="none" stroke="#1A1E2A" stroke-width="1.9"/><path d="M11.0,3 l1,-1.5 M14.0,3.5 l1.5,-1.5 M17.0,5 l1.8,-1 M8.0,3.2 l0.5,-1.6" stroke="#1A1E2A" stroke-width="0.9"/><rect x="0" y="12.5" width="8" height="3" fill="#66E040"/><rect x="2.5" y="10" width="3" height="8" fill="#66E040"/><line x1="9" y1="13" x2="14" y2="18" stroke="#3A78D8" stroke-width="1.6"/><path d="M12,13 Q15,10 18,13 Q20,16 16,18" fill="none" stroke="#3A78D8" stroke-width="1.8"/></g>
<g transform="translate(100,68)"><path d="M0,8.5 Q10.0,0.5 20,7 Q10.0,12.5 0,8.5Z" fill="#B8C4EC"/><circle cx="9.5" cy="7" r="3.8" fill="#4A6498"/><circle cx="9.5" cy="7" r="1.5" fill="#101830"/><circle cx="8.2" cy="5.6" r="0.9" fill="#E0F0FF"/><path d="M0,8.5 Q10.0,0.5 20,7" fill="none" stroke="#1A1E2A" stroke-width="1.9"/><path d="M11.0,3 l1,-1.5 M14.0,3.5 l1.5,-1.5 M17.0,5 l1.8,-1 M8.0,3.2 l0.5,-1.6" stroke="#1A1E2A" stroke-width="0.9"/><rect x="0" y="13" width="9" height="3" fill="#E8D800"/><line x1="10" y1="13" x2="15" y2="18" stroke="#3A78D8" stroke-width="1.6"/><path d="M12,13 Q15,10 18,13 Q20,16 16,18" fill="none" stroke="#3A78D8" stroke-width="1.8"/></g>
<g transform="translate(126,68)"><path d="M1,8.5 Q10.0,0.5 19,7 Q10.0,12.5 1,8.5Z" fill="#B8C4EC"/><circle cx="9.5" cy="7" r="3.8" fill="#4A6498"/><circle cx="9.5" cy="7" r="1.5" fill="#101830"/><circle cx="8.2" cy="5.6" r="0.9" fill="#E0F0FF"/><path d="M1,8.5 Q10.0,0.5 19,7" fill="none" stroke="#1A1E2A" stroke-width="1.9"/><path d="M10.9,3 l1,-1.5 M13.6,3.5 l1.5,-1.5 M16.299999999999997,5 l1.8,-1 M8.2,3.2 l0.5,-1.6" stroke="#1A1E2A" stroke-width="0.9"/><rect x="1" y="8" width="6" height="12" rx="3" fill="#101010"/><circle cx="4" cy="11" r="2.2" fill="#E8C000"/><circle cx="4" cy="17" r="2.2" fill="#10C010"/><rect x="13" y="8" width="6" height="12" rx="3" fill="#101010"/><circle cx="16" cy="11" r="2.2" fill="#E01010"/><circle cx="16" cy="17" r="2.2" fill="#E8C000"/></g>
<g transform="translate(152,68)"><path d="M0,8.5 Q10.0,0.5 20,7 Q10.0,12.5 0,8.5Z" fill="#B8C4EC"/><circle cx="9.5" cy="7" r="3.8" fill="#4A6498"/><circle cx="9.5" cy="7" r="1.5" fill="#101830"/><circle cx="8.2" cy="5.6" r="0.9" fill="#E0F0FF"/><path d="M0,8.5 Q10.0,0.5 20,7" fill="none" stroke="#1A1E2A" stroke-width="1.9"/><path d="M11.0,3 l1,-1.5 M14.0,3.5 l1.5,-1.5 M17.0,5 l1.8,-1 M8.0,3.2 l0.5,-1.6" stroke="#1A1E2A" stroke-width="0.9"/><path d="M4,13.0 A6.0,6.0 0 0 1 15,10.0" fill="none" stroke="#40B040" stroke-width="3.5"/><path d="M16,13.0 A6.0,6.0 0 0 1 5,16.0" fill="none" stroke="#D8D020" stroke-width="3.5"/><polygon points="11,8.0 18,8.0 15,14.0" fill="#40B040"/><polygon points="9,18.0 2,18.0 5,12.0" fill="#D8D020"/></g>
<g transform="translate(177.5,68)"><path d="M0,8.5 Q10.0,0.5 20,7 Q10.0,12.5 0,8.5Z" fill="#B8C4EC"/><circle cx="9.5" cy="7" r="3.8" fill="#4A6498"/><circle cx="9.5" cy="7" r="1.5" fill="#101830"/><circle cx="8.2" cy="5.6" r="0.9" fill="#E0F0FF"/><path d="M0,8.5 Q10.0,0.5 20,7" fill="none" stroke="#1A1E2A" stroke-width="1.9"/><path d="M11.0,3 l1,-1.5 M14.0,3.5 l1.5,-1.5 M17.0,5 l1.8,-1 M8.0,3.2 l0.5,-1.6" stroke="#1A1E2A" stroke-width="0.9"/><rect x="1" y="11.0" width="7" height="3" fill="#66E040"/><rect x="3.0" y="9" width="3" height="7" fill="#66E040"/><line x1="8" y1="18" x2="12" y2="12" stroke="#202020" stroke-width="1"/><rect x="11" y="15" width="8" height="3" fill="#E8D800"/></g>
<g transform="translate(203,68)"><path d="M0,8.5 Q10.0,0.5 20,7 Q10.0,12.5 0,8.5Z" fill="#B8C4EC"/><circle cx="9.5" cy="7" r="3.8" fill="#4A6498"/><circle cx="9.5" cy="7" r="1.5" fill="#101830"/><circle cx="8.2" cy="5.6" r="0.9" fill="#E0F0FF"/><path d="M0,8.5 Q10.0,0.5 20,7" fill="none" stroke="#1A1E2A" stroke-width="1.9"/><path d="M11.0,3 l1,-1.5 M14.0,3.5 l1.5,-1.5 M17.0,5 l1.8,-1 M8.0,3.2 l0.5,-1.6" stroke="#1A1E2A" stroke-width="0.9"/><rect x="6" y="13.0" width="9" height="3" fill="#66E040"/><rect x="9.0" y="10" width="3" height="9" fill="#66E040"/></g>
<g transform="translate(229,68)"><path d="M0,8.5 Q10.0,0.5 20,7 Q10.0,12.5 0,8.5Z" fill="#B8C4EC"/><circle cx="9.5" cy="7" r="3.8" fill="#4A6498"/><circle cx="9.5" cy="7" r="1.5" fill="#101830"/><circle cx="8.2" cy="5.6" r="0.9" fill="#E0F0FF"/><path d="M0,8.5 Q10.0,0.5 20,7" fill="none" stroke="#1A1E2A" stroke-width="1.9"/><path d="M11.0,3 l1,-1.5 M14.0,3.5 l1.5,-1.5 M17.0,5 l1.8,-1 M8.0,3.2 l0.5,-1.6" stroke="#1A1E2A" stroke-width="0.9"/><rect x="7" y="11" width="10" height="3" fill="#E8D800"/></g>
<g transform="translate(272.5,68)"><path d="M3,11.0 A7.0,7.0 0 0 1 16,8.0" fill="none" stroke="#5890D8" stroke-width="3.5"/><path d="M17,11.0 A7.0,7.0 0 0 1 4,14.0" fill="none" stroke="#80B0E8" stroke-width="3.5"/><polygon points="12,6.0 19,6.0 16,12.0" fill="#5890D8"/><polygon points="8,16.0 1,16.0 4,10.0" fill="#80B0E8"/></g>
<g transform="translate(300,68)"><path d="M5,4.5 L5,15.5 A5.0,2.5 0 0 0 15,15.5 L15,4.5" fill="none" stroke="#303030" stroke-width="1.1"/><ellipse cx="10.0" cy="4.5" rx="5.0" ry="2.5" fill="none" stroke="#303030" stroke-width="1.1"/></g>
<g transform="translate(326,68)"><path d="M5,4.5 L5,15.5 A5.0,2.5 0 0 0 15,15.5 L15,4.5" fill="none" stroke="#303030" stroke-width="1.1"/><ellipse cx="10.0" cy="4.5" rx="5.0" ry="2.5" fill="none" stroke="#303030" stroke-width="1.1"/></g>
<g transform="translate(352.5,68)"><path d="M5,4.5 L5,15.5 A5.0,2.5 0 0 0 15,15.5 L15,4.5" fill="none" stroke="#303030" stroke-width="1.1"/><ellipse cx="10.0" cy="4.5" rx="5.0" ry="2.5" fill="none" stroke="#303030" stroke-width="1.1"/></g>
<g transform="translate(378,68)"><ellipse cx="13.0" cy="18" rx="5.0" ry="2" fill="#8890A0" opacity="0.6"/><path d="M5,4.5 L5,15.5 A5.0,2.5 0 0 0 15,15.5 L15,4.5" fill="#4A78C0" stroke="#20D0F0" stroke-width="1.3"/><ellipse cx="10.0" cy="4.5" rx="5.0" ry="2.5" fill="#4A78C0" stroke="#20D0F0" stroke-width="1.3"/></g>
<g transform="translate(404,68)"><rect x="-2" y="-3" width="24" height="25" fill="#FCE080" stroke="#E0B040" stroke-width="1"/><ellipse cx="13.0" cy="18" rx="5.0" ry="2" fill="#8890A0" opacity="0.6"/><path d="M5,4.5 L5,15.5 A5.0,2.5 0 0 0 15,15.5 L15,4.5" fill="#3A68B0" stroke="#102040" stroke-width="1.3"/><ellipse cx="10.0" cy="4.5" rx="5.0" ry="2.5" fill="#3A68B0" stroke="#102040" stroke-width="1.3"/></g>
<g transform="translate(430,68)"><ellipse cx="13.0" cy="18" rx="5.0" ry="2" fill="#8890A0" opacity="0.6"/><path d="M5,4.5 L5,15.5 A5.0,2.5 0 0 0 15,15.5 L15,4.5" fill="#D8E4F4" stroke="#40D8F0" stroke-width="1.2"/><ellipse cx="10.0" cy="4.5" rx="5.0" ry="2.5" fill="#D8E4F4" stroke="#40D8F0" stroke-width="1.2"/></g>
<g transform="translate(456,68)"><ellipse cx="13.0" cy="18" rx="5.0" ry="2" fill="#8890A0" opacity="0.6"/><path d="M5,4.5 L5,15.5 A5.0,2.5 0 0 0 15,15.5 L15,4.5" fill="#D0DCF0" stroke="#404860" stroke-width="1.1"/><ellipse cx="10.0" cy="4.5" rx="5.0" ry="2.5" fill="#D0DCF0" stroke="#404860" stroke-width="1.1"/></g>
<g transform="translate(482,68)"><path d="M5,4.5 L5,15.5 A5.0,2.5 0 0 0 15,15.5 L15,4.5" fill="#E0E0E0" stroke="#303030" stroke-width="1.1"/><ellipse cx="10.0" cy="4.5" rx="5.0" ry="2.5" fill="#E0E0E0" stroke="#303030" stroke-width="1.1"/><path d="M7,6 L9,16 M11,5 L12,17 M13,6 L8,17" stroke="#303030" stroke-width="0.8"/></g>
<g transform="translate(507,68)"><path d="M1,3.5 L1,11.5 A4.5,2.5 0 0 0 10,11.5 L10,3.5" fill="#E8E8E8" stroke="#404040" stroke-width="1.1"/><ellipse cx="5.5" cy="3.5" rx="4.5" ry="2.5" fill="#E8E8E8" stroke="#404040" stroke-width="1.1"/><path d="M9,8.5 L9,16.5 A4.5,2.5 0 0 0 18,16.5 L18,8.5" fill="#3A68B0" stroke="#102040" stroke-width="1.1"/><ellipse cx="13.5" cy="8.5" rx="4.5" ry="2.5" fill="#3A68B0" stroke="#102040" stroke-width="1.1"/><path d="M2,15.5 A2.5,2.5 0 0 1 6,12.5" fill="none" stroke="#40C040" stroke-width="3.5"/><path d="M7,15.5 A2.5,2.5 0 0 1 3,18.5" fill="none" stroke="#40C040" stroke-width="3.5"/><polygon points="2,10.5 9,10.5 6,16.5" fill="#40C040"/><polygon points="7,20.5 0,20.5 3,14.5" fill="#40C040"/></g>
<g transform="translate(534,68)"><path d="M2,4.5 L2,14.5 A5.0,2.5 0 0 0 12,14.5 L12,4.5" fill="#3A68B0" stroke="#102040" stroke-width="1.1"/><ellipse cx="7.0" cy="4.5" rx="5.0" ry="2.5" fill="#3A68B0" stroke="#102040" stroke-width="1.1"/><path d="M9,13.5 A4.5,4.5 0 0 1 17,10.5" fill="none" stroke="#5890D8" stroke-width="3.5"/><path d="M18,13.5 A4.5,4.5 0 0 1 10,16.5" fill="none" stroke="#80B0E8" stroke-width="3.5"/><polygon points="13,8.5 20,8.5 17,14.5" fill="#5890D8"/><polygon points="14,18.5 7,18.5 10,12.5" fill="#80B0E8"/></g>
<g transform="translate(560,68)"><rect x="1" y="3" width="17" height="14" fill="#606878"/><path d="M4,16 L16,4 M4,4 L16,16" stroke="#C8D8F0" stroke-width="2.5"/><path d="M3,17 L8,12" stroke="#3A78C8" stroke-width="3"/></g>
<g transform="translate(602,68)"><polygon points="1,4 4,1 12,1 9,4" fill="#E8E8E8" stroke="#404040" stroke-width="0.7"/><rect x="1" y="4" width="8" height="8" fill="#A0A0A0" stroke="#404040" stroke-width="0.7"/><polygon points="9,4 12,1 12,9 9,12" fill="#707070" stroke="#404040" stroke-width="0.7"/><polygon points="9,4 12,1 20,1 17,4" fill="#F0F0F0" stroke="#404040" stroke-width="0.7"/><rect x="9" y="4" width="8" height="8" fill="#F8F8F8" stroke="#404040" stroke-width="0.7"/><polygon points="17,4 20,1 20,9 17,12" fill="#C0C0C0" stroke="#404040" stroke-width="0.7"/><rect x="1" y="13.0" width="7" height="3" fill="#66E040"/><rect x="3.0" y="11" width="3" height="7" fill="#66E040"/><path d="M10,13 Q13,10 16,13 Q18,16 14,18" fill="none" stroke="#3A78D8" stroke-width="1.8"/></g>
<g transform="translate(628,68)"><polygon points="1,4 4,1 12,1 9,4" fill="#E8E8E8" stroke="#404040" stroke-width="0.7"/><rect x="1" y="4" width="8" height="8" fill="#A0A0A0" stroke="#404040" stroke-width="0.7"/><polygon points="9,4 12,1 12,9 9,12" fill="#707070" stroke="#404040" stroke-width="0.7"/><polygon points="9,4 12,1 20,1 17,4" fill="#F0F0F0" stroke="#404040" stroke-width="0.7"/><rect x="9" y="4" width="8" height="8" fill="#F8F8F8" stroke="#404040" stroke-width="0.7"/><polygon points="17,4 20,1 20,9 17,12" fill="#C0C0C0" stroke="#404040" stroke-width="0.7"/><rect x="2" y="6" width="6" height="12" rx="3" fill="#101010"/><circle cx="5" cy="9" r="2.2" fill="#E8C000"/><circle cx="5" cy="15" r="2.2" fill="#10C010"/><rect x="12" y="6" width="6" height="12" rx="3" fill="#101010"/><circle cx="15" cy="9" r="2.2" fill="#E01010"/><circle cx="15" cy="15" r="2.2" fill="#E8C000"/></g>
<g transform="translate(654.5,68)"><polygon points="1,4 4,1 12,1 9,4" fill="#E8E8E8" stroke="#404040" stroke-width="0.7"/><rect x="1" y="4" width="8" height="8" fill="#A0A0A0" stroke="#404040" stroke-width="0.7"/><polygon points="9,4 12,1 12,9 9,12" fill="#707070" stroke="#404040" stroke-width="0.7"/><polygon points="9,4 12,1 20,1 17,4" fill="#F0F0F0" stroke="#404040" stroke-width="0.7"/><rect x="9" y="4" width="8" height="8" fill="#F8F8F8" stroke="#404040" stroke-width="0.7"/><polygon points="17,4 20,1 20,9 17,12" fill="#C0C0C0" stroke="#404040" stroke-width="0.7"/><path d="M4,12.0 A6.0,6.0 0 0 1 15,9.0" fill="none" stroke="#40B040" stroke-width="3.5"/><path d="M16,12.0 A6.0,6.0 0 0 1 5,15.0" fill="none" stroke="#D8D020" stroke-width="3.5"/><polygon points="11,7.0 18,7.0 15,13.0" fill="#40B040"/><polygon points="9,17.0 2,17.0 5,11.0" fill="#D8D020"/></g>
<g transform="translate(680,68)"><polygon points="1,4 4,1 12,1 9,4" fill="#E8E8E8" stroke="#404040" stroke-width="0.7"/><rect x="1" y="4" width="8" height="8" fill="#A0A0A0" stroke="#404040" stroke-width="0.7"/><polygon points="9,4 12,1 12,9 9,12" fill="#707070" stroke="#404040" stroke-width="0.7"/><polygon points="9,4 12,1 20,1 17,4" fill="#F0F0F0" stroke="#404040" stroke-width="0.7"/><rect x="9" y="4" width="8" height="8" fill="#F8F8F8" stroke="#404040" stroke-width="0.7"/><polygon points="17,4 20,1 20,9 17,12" fill="#C0C0C0" stroke="#404040" stroke-width="0.7"/><rect x="1" y="12.0" width="7" height="3" fill="#66E040"/><rect x="3.0" y="10" width="3" height="7" fill="#66E040"/><line x1="6" y1="19" x2="11" y2="12" stroke="#202020" stroke-width="1"/><rect x="11" y="16" width="8" height="3" fill="#E8D800"/></g>
<g transform="translate(707,68)"><ellipse cx="13.0" cy="18" rx="5.0" ry="2" fill="#8890A0" opacity="0.6"/><path d="M5,4.5 L5,15.5 A5.0,2.5 0 0 0 15,15.5 L15,4.5" fill="#4A78C0" stroke="#102040" stroke-width="1.2"/><ellipse cx="10.0" cy="4.5" rx="5.0" ry="2.5" fill="#4A78C0" stroke="#102040" stroke-width="1.2"/><line x1="10" y1="6" x2="10" y2="17" stroke="#fff" stroke-width="1" stroke-dasharray="1.5,1.5"/></g>
<g transform="translate(733.5,68)"><ellipse cx="13.0" cy="18" rx="5.0" ry="2" fill="#8890A0" opacity="0.6"/><path d="M5,4.5 L5,15.5 A5.0,2.5 0 0 0 15,15.5 L15,4.5" fill="#4A78C0" stroke="#102040" stroke-width="1.2"/><ellipse cx="10.0" cy="4.5" rx="5.0" ry="2.5" fill="#4A78C0" stroke="#102040" stroke-width="1.2"/><rect x="8.5" y="5" width="3" height="12" fill="#E8E060"/></g>
<g transform="translate(759.5,68)"><ellipse cx="13.0" cy="18" rx="5.0" ry="2" fill="#8890A0" opacity="0.6"/><path d="M5,4.5 L5,15.5 A5.0,2.5 0 0 0 15,15.5 L15,4.5" fill="#D0DCF0" stroke="#40D8F0" stroke-width="1.2"/><ellipse cx="10.0" cy="4.5" rx="5.0" ry="2.5" fill="#D0DCF0" stroke="#40D8F0" stroke-width="1.2"/><path d="M6,11 L9,15 L16,6" fill="none" stroke="#20B020" stroke-width="3"/></g>
<g transform="translate(785,68)"><ellipse cx="13.0" cy="18" rx="5.0" ry="2" fill="#8890A0" opacity="0.6"/><path d="M5,5.5 L5,15.5 A5.0,2.5 0 0 0 15,15.5 L15,5.5" fill="#D0DCF0" stroke="#40D8F0" stroke-width="1.2"/><ellipse cx="10.0" cy="5.5" rx="5.0" ry="2.5" fill="#D0DCF0" stroke="#40D8F0" stroke-width="1.2"/><rect x="12" y="0" width="6" height="6" fill="#F0A030"/><rect x="13.5" y="1.5" width="3" height="3" fill="#E06020"/></g>
<g transform="translate(811.5,68)"><path d="M5,4.5 L5,15.5 A5.0,2.5 0 0 0 15,15.5 L15,4.5" fill="none" stroke="#70A0E0" stroke-width="1.1"/><ellipse cx="10.0" cy="4.5" rx="5.0" ry="2.5" fill="none" stroke="#70A0E0" stroke-width="1.1"/><path d="M7,6 L9,16 M11,5 L12,17 M13,6 L8,17" stroke="#70A0E0" stroke-width="0.8"/></g>
<g transform="translate(837,68)"><polygon points="1,5 10,1 19,5 10,9" fill="#6890D8" stroke="#102050" stroke-width="1"/><polygon points="1,5 10,9 10,19" fill="#2A4AA0" stroke="#102050" stroke-width="1"/><polygon points="19,5 10,9 10,19" fill="#1A3A80" stroke="#102050" stroke-width="1"/></g>
<g transform="translate(879,68)"><text x="0" y="6" font-size="8" fill="#000">+</text><circle cx="9" cy="8" r="5.5" fill="#C8DCF0" stroke="#606060" stroke-width="1.5"/><line x1="5" y1="12" x2="1" y2="17" stroke="#808080" stroke-width="2.5"/><polygon points="10,13 13,10 20,10 17,13" fill="#A0A0A0" stroke="#404040" stroke-width="0.7"/><rect x="10" y="13" width="7" height="7" fill="#606060" stroke="#404040" stroke-width="0.7"/><polygon points="17,13 20,10 20,17 17,20" fill="#404040" stroke="#404040" stroke-width="0.7"/></g>
<g transform="translate(905,68)"><circle cx="10" cy="8" r="5.5" fill="#C8DCF0" stroke="#606060" stroke-width="1.5"/><line x1="6" y1="12" x2="2" y2="17" stroke="#808080" stroke-width="2.5"/><polygon points="11,13 14,10 21,10 18,13" fill="#A0A0A0" stroke="#404040" stroke-width="0.7"/><rect x="11" y="13" width="7" height="7" fill="#606060" stroke="#404040" stroke-width="0.7"/><polygon points="18,13 21,10 21,17 18,20" fill="#404040" stroke="#404040" stroke-width="0.7"/><circle cx="2" cy="2" r="1.8" fill="#30C030"/><circle cx="18" cy="2" r="1.8" fill="#30C030"/><circle cx="2" cy="18" r="1.8" fill="#30C030"/></g>
<g transform="translate(931,68)"><rect x="3" y="4" width="14" height="12" fill="#F0F0F8" stroke="#303030" stroke-width="1"/><text x="4.5" y="13.5" font-size="8" font-family="Liberation Sans" fill="#000">1:1</text><circle cx="2" cy="3" r="1.8" fill="#30C030"/><circle cx="18" cy="3" r="1.8" fill="#30C030"/><circle cx="2" cy="17" r="1.8" fill="#30C030"/><circle cx="18" cy="17" r="1.8" fill="#30C030"/></g>
<g transform="translate(957,68)"><line x1="4" y1="16" x2="16" y2="4" stroke="#30B030" stroke-width="2"/><polygon points="11,3 18,2 17,9" fill="#30B030"/><circle cx="4" cy="16" r="3" fill="#A0A0A0" stroke="#404040" stroke-width="0.8"/></g>
<g transform="translate(983,68)"><path d="M3,10.0 A7.0,7.0 0 0 1 16,7.0" fill="none" stroke="#30B030" stroke-width="3.5"/><path d="M17,10.0 A7.0,7.0 0 0 1 4,13.0" fill="none" stroke="#30B030" stroke-width="3.5"/><polygon points="12,5.0 19,5.0 16,11.0" fill="#30B030"/><polygon points="8,15.0 1,15.0 4,9.0" fill="#30B030"/></g>
<g transform="translate(1009,68)"><path d="M1,8.5 Q10.0,0.5 19,7 Q10.0,12.5 1,8.5Z" fill="#B8C4EC"/><circle cx="9.5" cy="7" r="3.8" fill="#4A6498"/><circle cx="9.5" cy="7" r="1.5" fill="#101830"/><circle cx="8.2" cy="5.6" r="0.9" fill="#E0F0FF"/><path d="M1,8.5 Q10.0,0.5 19,7" fill="none" stroke="#1A1E2A" stroke-width="1.9"/><path d="M10.9,3 l1,-1.5 M13.6,3.5 l1.5,-1.5 M16.299999999999997,5 l1.8,-1 M8.2,3.2 l0.5,-1.6" stroke="#1A1E2A" stroke-width="0.9"/><circle cx="10" cy="12" r="6" fill="#F0D040" stroke="#C09020" stroke-width="0.8"/><circle cx="8" cy="11" r="0.8" fill="#000"/><circle cx="12" cy="11" r="0.8" fill="#000"/><path d="M7,14 Q10,16 13,14" fill="none" stroke="#000" stroke-width="0.8"/></g>
<g transform="translate(1052,68)"><polygon points="2,10 10,4 18,10 10,17" fill="#D0D8E8" stroke="#808890" stroke-width="1"/><line x1="5" y1="14" x2="5" y2="1" stroke="#2060E0" stroke-width="1.5"/><line x1="5" y1="14" x2="15" y2="7" stroke="#30B030" stroke-width="1.5"/><line x1="5" y1="14" x2="14" y2="18" stroke="#E02020" stroke-width="1.5"/><circle cx="5" cy="14" r="1.8" fill="#808080"/></g>
<g transform="translate(1078,68)"><polygon points="8,6 14,2 19,6 13,10" fill="#D0D8E8" stroke="#808890" stroke-width="0.8"/><rect x="9" y="13" width="9" height="5" fill="#D8D8D8" stroke="#606060" stroke-width="1"/><path d="M2,17 L10,8" stroke="#30B030" stroke-width="3"/><polygon points="7,5 12,6 10,11" fill="#30B030"/><line x1="13" y1="8" x2="13" y2="0" stroke="#2060E0" stroke-width="1"/></g>
<g transform="translate(1104,68)"><polygon points="8,6 14,2 19,6 13,10" fill="#D0D8E8" stroke="#808890" stroke-width="0.8"/><path d="M3,8 L8,18 M8,9 L3,19" stroke="#30B030" stroke-width="3"/><line x1="12" y1="8" x2="12" y2="0" stroke="#2060E0" stroke-width="1"/><line x1="12" y1="8" x2="17" y2="10" stroke="#E02020" stroke-width="1"/></g>
<g transform="translate(1147,68)"><rect x="1" y="1" width="6" height="6" fill="#10C8F0"/><rect x="7" y="1" width="6" height="6" fill="#F0D000"/><rect x="13" y="1" width="6" height="6" fill="#20C020"/><rect x="1" y="7" width="6" height="6" fill="#F08000"/><rect x="7" y="7" width="6" height="6" fill="#A06010"/><rect x="13" y="7" width="6" height="6" fill="#F020F0"/><rect x="1" y="13" width="6" height="6" fill="#1020E0"/><rect x="7" y="13" width="6" height="6" fill="#10A030"/><rect x="13" y="13" width="6" height="6" fill="#808080"/></g>
<g transform="translate(1173,68)"><rect x="3" y="1" width="14" height="18" fill="#F0F0F0" stroke="#707070" stroke-width="1"/><rect x="5" y="3" width="10" height="2" fill="#F0D040"/><rect x="5" y="7" width="3" height="3" fill="#40C040"/><rect x="9" y="7" width="3" height="3" fill="#E040E0"/><rect x="5" y="11" width="3" height="3" fill="#2040E0"/><rect x="9" y="11" width="3" height="3" fill="#F08020"/><rect x="13" y="11" width="3" height="3" fill="#40C0E0"/></g>
<g transform="translate(1199,68)"><circle cx="10" cy="10" r="9" fill="#6A9A4A" stroke="#305020" stroke-width="1"/><path d="M5,15 L15,5 M5,5 L15,15" stroke="#F0F0F0" stroke-width="2.5"/></g>
<g transform="translate(1225,68)"><rect x="1" y="1" width="18" height="18" fill="#C8DCF0" stroke="#304060" stroke-width="1"/><rect x="1" y="1" width="18" height="4" fill="#3060A0"/><path d="M6,16 L15,7 M6,7 L15,16" stroke="#506070" stroke-width="2"/></g>
<g transform="translate(1251,68)"><rect x="1" y="3" width="18" height="15" fill="none" stroke="#203080" stroke-width="1" stroke-dasharray="1.5,1.5"/><path d="M5,12 L12,5 L18,6 L14,12 Z" fill="#E8B070" stroke="#805020" stroke-width="0.8"/><circle cx="4" cy="14" r="3" fill="#F0E040" stroke="#3060C0" stroke-width="1"/></g>
<g transform="translate(1277,68)"><polygon points="4,4 19,1 16,17 1,19" fill="#3050C0" stroke="#102080" stroke-width="1"/><path d="M6,5 L4,17 M10,4 L8,17 M14,3 L12,16 M3,9 L17,6 M2,13 L17,10" stroke="#E04060" stroke-width="0.8"/></g>
<rect x="2" y="121" width="56" height="2" fill="url(#dots)"/>
<rect x="2" y="375" width="56" height="2" fill="url(#dots)"/>
<g transform="translate(7,133.0)"><circle cx="12" cy="9" r="6" fill="#C8DCF0" stroke="#707880" stroke-width="1.5"/><path d="M2,5 L8,5 M2,8 L7,8 M2,11 L7,11" stroke="#A0A8B0" stroke-width="1.5"/><line x1="8" y1="13" x2="3" y2="18" stroke="#909090" stroke-width="2.5"/></g>
<g transform="translate(33.5,133.0)"><path d="M2,2 L4,4 M6,6 L18,18" stroke="#3A78D8" stroke-width="1.6"/><polygon points="5,15 16,4 19,7 8,18" fill="#E0A848" stroke="#604010" stroke-width="0.8"/><polygon points="5,15 8,18 3,20" fill="#403020"/><polygon points="16,4 19,7 20,6 17,3" fill="#D03030"/><ellipse cx="9" cy="18.5" rx="6" ry="1.5" fill="#707888" opacity="0.5"/><polygon points="14,-0.5 20.5,-0.5 17.25,3" fill="#000"/></g>
<g transform="translate(7,158.75)"><rect x="5" y="5" width="10" height="10" fill="#E8F0FF" stroke="#303030" stroke-width="1"/><circle cx="3" cy="3" r="2" fill="#30C030"/><circle cx="17" cy="3" r="2" fill="#30C030"/><circle cx="3" cy="17" r="2" fill="#30C030"/><circle cx="17" cy="17" r="2" fill="#30C030"/></g>
<g transform="translate(33.5,158.75)"><path d="M8,3 Q1,3 2,10 Q4,14 10,12 Q18,12 17,17 Q14,21 9,18" fill="none" stroke="#3A78D8" stroke-width="1.6"/><polygon points="5,15 16,4 19,7 8,18" fill="#E0A848" stroke="#604010" stroke-width="0.8"/><polygon points="5,15 8,18 3,20" fill="#403020"/><polygon points="16,4 19,7 20,6 17,3" fill="#D03030"/><ellipse cx="9" cy="18.5" rx="6" ry="1.5" fill="#707888" opacity="0.5"/><polygon points="14,-0.5 20.5,-0.5 17.25,3" fill="#000"/></g>
<g transform="translate(7,184.5)"><text x="0" y="6" font-size="8" fill="#000">+</text><circle cx="9" cy="8" r="5.5" fill="#C8DCF0" stroke="#606060" stroke-width="1.5"/><line x1="5" y1="12" x2="1" y2="17" stroke="#808080" stroke-width="2.5"/><polygon points="10,13 13,10 20,10 17,13" fill="#A0A0A0" stroke="#404040" stroke-width="0.7"/><rect x="10" y="13" width="7" height="7" fill="#606060" stroke="#404040" stroke-width="0.7"/><polygon points="17,13 20,10 20,17 17,20" fill="#404040" stroke="#404040" stroke-width="0.7"/></g>
<g transform="translate(33.5,184.5)"><rect x="2" y="3" width="15" height="15" fill="#F8F8D0" stroke="#E8D000" stroke-width="2"/><path d="M5,10 L9,15 L17,4" fill="none" stroke="#30B030" stroke-width="3"/><polygon points="14,-0.5 20.5,-0.5 17.25,3" fill="#000"/></g>
<g transform="translate(7,210.25)"><polygon points="2,10 10,4 18,10 10,17" fill="#D0D8E8" stroke="#808890" stroke-width="1"/><line x1="5" y1="14" x2="5" y2="1" stroke="#2060E0" stroke-width="1.5"/><line x1="5" y1="14" x2="15" y2="7" stroke="#30B030" stroke-width="1.5"/><line x1="5" y1="14" x2="14" y2="18" stroke="#E02020" stroke-width="1.5"/><circle cx="5" cy="14" r="1.8" fill="#808080"/></g>
<g transform="translate(33.5,210.25)"><path d="M2,14 Q3,2 8,4 Q12,8 12,14 Q14,20 18,12" fill="none" stroke="#3A78D8" stroke-width="1.6"/><polygon points="5,15 16,4 19,7 8,18" fill="#E0A848" stroke="#604010" stroke-width="0.8"/><polygon points="5,15 8,18 3,20" fill="#403020"/><polygon points="16,4 19,7 20,6 17,3" fill="#D03030"/><ellipse cx="9" cy="18.5" rx="6" ry="1.5" fill="#707888" opacity="0.5"/><polygon points="14,-0.5 20.5,-0.5 17.25,3" fill="#000"/></g>
<g transform="translate(7,236.0)"><rect x="1" y="2" width="11" height="3" fill="#8AA8E0"/><rect x="1" y="5" width="11" height="3" fill="#B0C0E8"/><rect x="1" y="8" width="11" height="3" fill="#E0E0E0" stroke="#909090" stroke-width="0.5"/><ellipse cx="9" cy="14" rx="7" ry="4.5" fill="#C89860" stroke="#705030" stroke-width="0.8"/><circle cx="6" cy="14" r="1.6" fill="#2050E0"/><circle cx="9" cy="15.5" r="1.6" fill="#20B020"/><circle cx="12" cy="13" r="1.6" fill="#E02020"/><line x1="11" y1="11" x2="18" y2="1" stroke="#A06020" stroke-width="1.5"/></g>
<g transform="translate(33.5,236.0)"><polygon points="5,3 19,1 15,17 1,19" fill="#60A0E0" stroke="#2050A0" stroke-width="1"/><path d="M9,3 L7,18 M3,11 L17,9" stroke="#E0F0FF" stroke-width="1"/><polygon points="14,-0.5 20.5,-0.5 17.25,3" fill="#000"/></g>
<g transform="translate(7,261.75)"><path d="M3,11.0 A7.0,7.0 0 0 1 16,8.0" fill="none" stroke="#5890D8" stroke-width="3.5"/><path d="M17,11.0 A7.0,7.0 0 0 1 4,14.0" fill="none" stroke="#80B0E8" stroke-width="3.5"/><polygon points="12,6.0 19,6.0 16,12.0" fill="#5890D8"/><polygon points="8,16.0 1,16.0 4,10.0" fill="#80B0E8"/></g>
<g transform="translate(33.5,261.75)"><polygon points="2,7 5,4 17,4 14,7" fill="#D0D0D0" stroke="#303030" stroke-width="0.7"/><rect x="2" y="7" width="12" height="12" fill="#909090" stroke="#303030" stroke-width="0.7"/><polygon points="14,7 17,4 17,16 14,19" fill="#606060" stroke="#303030" stroke-width="0.7"/><polygon points="14,-0.5 20.5,-0.5 17.25,3" fill="#000"/></g>
<g transform="translate(7,287.5)"><text x="4" y="17" font-size="20" font-weight="bold" font-family="Liberation Sans" fill="#4A70B8">?</text><ellipse cx="10" cy="18" rx="5" ry="1.5" fill="#8890A0"/><polygon points="14,-0.5 20.5,-0.5 17.25,3" fill="#000"/></g>
<g transform="translate(33.5,287.5)"><path d="M2,3 L2,18 M18,3 L18,18" stroke="#303030" stroke-width="1.5"/><path d="M2,6 L18,6" stroke="#E8D000" stroke-width="2"/><polygon points="14,-0.5 20.5,-0.5 17.25,3" fill="#000"/></g>
<g transform="translate(7,313.25)"><path d="M4,6 L16,6 L14,19 L6,19 Z" fill="#A8D8F0" stroke="#406080" stroke-width="1"/><rect x="3" y="4" width="14" height="3" fill="#C0C8D0" stroke="#406080" stroke-width="0.8"/><rect x="7" y="0" width="6" height="5" fill="#F0D020"/><polygon points="14,-0.5 20.5,-0.5 17.25,3" fill="#000"/></g>
<g transform="translate(33.5,313.25)"><path d="M16,16 Q16,6 8,6 L8,2 L2,8 L8,14 L8,10 Q13,10 16,16Z" fill="#909090" stroke="#606060" stroke-width="0.8"/><polygon points="14,-0.5 20.5,-0.5 17.25,3" fill="#000"/></g>
<g transform="translate(7,339.0)"><circle cx="10" cy="11" r="7" fill="none" stroke="#F08020" stroke-width="2"/><path d="M10,3 L10,19 M2,11 L18,11 M4,5 L16,17 M16,5 L4,17" stroke="#F08020" stroke-width="1.5"/><rect x="1" y="1" width="4" height="18" fill="#606060"/><polygon points="14,-0.5 20.5,-0.5 17.25,3" fill="#000"/></g>
<g transform="translate(33.5,339.0)"><path d="M1,5 L7,5 L9,3 L17,3 L17,14 L1,14Z" fill="#F0D070" stroke="#A08030" stroke-width="1"/><rect x="6" y="9" width="13" height="10" fill="#F8F8F8" stroke="#606060" stroke-width="1"/><rect x="5" y="1" width="8" height="5" fill="#30B030"/></g>
<rect x="64" y="113" width="24" height="24" fill="#8A8A9C"/><g transform="translate(66,115)"><rect x="2" y="3" width="16" height="3" fill="#405A88"/><rect x="2" y="8.5" width="16" height="3" fill="#405A88"/><rect x="2" y="14" width="16" height="3" fill="#405A88"/></g>
<rect x="92" y="113" width="24" height="24" fill="#8A8A9C"/><g transform="translate(94,115)"><rect x="5" y="5" width="10" height="10" fill="#E8F0FF" stroke="#303030" stroke-width="1"/><circle cx="3" cy="3" r="2" fill="#30C030"/><circle cx="17" cy="3" r="2" fill="#30C030"/><circle cx="3" cy="17" r="2" fill="#30C030"/><circle cx="17" cy="17" r="2" fill="#30C030"/></g>
<rect x="120" y="113" width="24" height="24" fill="#8A8A9C"/><g transform="translate(122,115)"><circle cx="12" cy="9" r="6" fill="#A8C4E4" stroke="#5A7090" stroke-width="1.5"/><path d="M1,4 L8,4 M1,8 L6,8 M1,12 L6,12" stroke="#D0D8E0" stroke-width="1.8"/><line x1="7" y1="14" x2="2" y2="19" stroke="#D0D0D0" stroke-width="2.8"/></g>
<rect x="148" y="113" width="24" height="24" fill="#8A8A9C"/><g transform="translate(150,115)"><polygon points="2,13 11,8 20,12 11,18" fill="none" stroke="#606070" stroke-width="0.6"/><line x1="10" y1="13" x2="10" y2="3" stroke="#1860F0" stroke-width="2"/><polygon points="7,4 13,4 10,0" fill="#1860F0"/><line x1="10" y1="13" x2="17" y2="7" stroke="#30B030" stroke-width="1.5"/><line x1="10" y1="13" x2="17" y2="18" stroke="#E02020" stroke-width="2"/><polygon points="14,18 19,20 18,15" fill="#E02020"/><circle cx="10" cy="13" r="2" fill="#E8E8E8" stroke="#404040" stroke-width="0.6"/></g>
<rect x="176" y="113" width="24" height="24" fill="#8A8A9C"/><g transform="translate(178,115)"><path d="M1,4.5 L10,0 L19,4.5 L19,15 L10,19.5 L1,15 Z M1,4.5 L10,9 L19,4.5 M10,9 L10,19.5 M10,0 L10,10.5 M1,15 L10,10.5 L19,15" fill="none" stroke="#000" stroke-width="1.3"/><polygon points="1,4.5 10,0 19,4.5 10,9" fill="#2EC42E" stroke="#000" stroke-width="1.3" stroke-linejoin="round"/></g>
<rect x="204" y="113" width="24" height="24" fill="#8A8A9C"/><g transform="translate(206,115)"><path d="M1,4.5 L10,0 L19,4.5 L19,15 L10,19.5 L1,15 Z M1,4.5 L10,9 L19,4.5 M10,9 L10,19.5 M10,0 L10,10.5 M1,15 L10,10.5 L19,15" fill="none" stroke="#000" stroke-width="1.3"/><polygon points="1,15 10,10.5 19,15 10,19.5" fill="#2EC42E" stroke="#000" stroke-width="1.3" stroke-linejoin="round"/></g>
<rect x="232" y="113" width="24" height="24" fill="#8A8A9C"/><g transform="translate(234,115)"><path d="M1,4.5 L10,0 L19,4.5 L19,15 L10,19.5 L1,15 Z M1,4.5 L10,9 L19,4.5 M10,9 L10,19.5 M10,0 L10,10.5 M1,15 L10,10.5 L19,15" fill="none" stroke="#000" stroke-width="1.3"/><polygon points="1,4.5 10,0 10,10.5 1,15" fill="#2EC42E" stroke="#000" stroke-width="1.3" stroke-linejoin="round"/></g>
<rect x="260" y="113" width="24" height="24" fill="#8A8A9C"/><g transform="translate(262,115)"><path d="M1,4.5 L10,0 L19,4.5 L19,15 L10,19.5 L1,15 Z M1,4.5 L10,9 L19,4.5 M10,9 L10,19.5 M10,0 L10,10.5 M1,15 L10,10.5 L19,15" fill="none" stroke="#000" stroke-width="1.3"/><polygon points="19,4.5 10,9 10,19.5 19,15" fill="#2EC42E" stroke="#000" stroke-width="1.3" stroke-linejoin="round"/></g>
<rect x="288" y="113" width="24" height="24" fill="#8A8A9C"/><g transform="translate(290,115)"><path d="M1,4.5 L10,0 L19,4.5 L19,15 L10,19.5 L1,15 Z M1,4.5 L10,9 L19,4.5 M10,9 L10,19.5 M10,0 L10,10.5 M1,15 L10,10.5 L19,15" fill="none" stroke="#000" stroke-width="1.3"/><polygon points="1,4.5 10,9 10,19.5 1,15" fill="#2EC42E" stroke="#000" stroke-width="1.3" stroke-linejoin="round"/></g>
<rect x="316" y="113" width="24" height="24" fill="#8A8A9C"/><g transform="translate(318,115)"><path d="M1,4.5 L10,0 L19,4.5 L19,15 L10,19.5 L1,15 Z M1,4.5 L10,9 L19,4.5 M10,9 L10,19.5 M10,0 L10,10.5 M1,15 L10,10.5 L19,15" fill="none" stroke="#000" stroke-width="1.3"/><polygon points="10,0 19,4.5 19,15 10,10.5" fill="#2EC42E" stroke="#000" stroke-width="1.3" stroke-linejoin="round"/></g>
<rect x="344" y="113" width="24" height="24" fill="#8A8A9C"/><g transform="translate(346,115)"><polygon points="1,4.5 10,9 10,19.5 1,15" fill="#28B828"/><polygon points="1,4.5 10,0 19,4.5 10,9" fill="#60E060"/><polygon points="19,4.5 10,9 10,19.5 19,15" fill="#1EA01E"/><path d="M1,4.5 L10,0 L19,4.5 L19,15 L10,19.5 L1,15 Z M1,4.5 L10,9 L19,4.5 M10,9 L10,19.5" fill="none" stroke="#108A10" stroke-width="0.8"/></g>
<rect x="64" y="141" width="24" height="24" fill="#8A8A9C"/><g transform="translate(66,143)"><path d="M5,4.5 L5,15.5 A5.0,2.5 0 0 0 15,15.5 L15,4.5" fill="none" stroke="#202020" stroke-width="1.1"/><ellipse cx="10.0" cy="4.5" rx="5.0" ry="2.5" fill="none" stroke="#202020" stroke-width="1.1"/></g>
<rect x="64" y="169" width="24" height="24" fill="#8A8A9C"/><g transform="translate(66,171)"><path d="M5,4.5 L5,15.5 A5.0,2.5 0 0 0 15,15.5 L15,4.5" fill="none" stroke="#202020" stroke-width="1.1"/><ellipse cx="10.0" cy="4.5" rx="5.0" ry="2.5" fill="none" stroke="#202020" stroke-width="1.1"/></g>
<rect x="64" y="197" width="24" height="24" fill="#B8A878" stroke="#E8C860" stroke-width="1.5"/><rect x="66" y="199" width="20" height="20" fill="#8A8A9C"/><g transform="translate(66,199)"><path d="M5,4.5 L5,15.5 A5.0,2.5 0 0 0 15,15.5 L15,4.5" fill="#4A78C0" stroke="#102040" stroke-width="1.2"/><ellipse cx="10.0" cy="4.5" rx="5.0" ry="2.5" fill="#4A78C0" stroke="#102040" stroke-width="1.2"/></g>
<rect x="64" y="225" width="24" height="24" fill="#8A8A9C"/><g transform="translate(66,227)"><path d="M5,4.5 L5,15.5 A5.0,2.5 0 0 0 15,15.5 L15,4.5" fill="#D0DCF0" stroke="#303840" stroke-width="1.1"/><ellipse cx="10.0" cy="4.5" rx="5.0" ry="2.5" fill="#D0DCF0" stroke="#303840" stroke-width="1.1"/></g>
<rect x="64" y="253" width="24" height="24" fill="#8A8A9C"/><g transform="translate(66,255)"><path d="M5,4.5 L5,15.5 A5.0,2.5 0 0 0 15,15.5 L15,4.5" fill="none" stroke="#202020" stroke-width="1.1"/><ellipse cx="10.0" cy="4.5" rx="5.0" ry="2.5" fill="none" stroke="#202020" stroke-width="1.1"/><path d="M7,6 L9,16 M11,5 L12,17 M13,6 L8,17" stroke="#202020" stroke-width="0.8"/></g>
<rect x="1132" y="1023" width="1" height="15" fill="#9098A8"/>
<rect x="1176" y="1023" width="1" height="15" fill="#9098A8"/>
<rect x="1207" y="1023" width="1" height="15" fill="#9098A8"/>
<rect x="1237" y="1023" width="1" height="15" fill="#9098A8"/>
<rect x="1268" y="1023" width="1" height="15" fill="#9098A8"/>
<rect x="1299" y="1023" width="1" height="15" fill="#9098A8"/>
<rect x="1330" y="1023" width="1" height="15" fill="#9098A8"/>
<rect x="1361" y="1023" width="1" height="15" fill="#9098A8"/>
<rect x="1392" y="1023" width="1" height="15" fill="#9098A8"/>
<rect x="1423" y="1023" width="1" height="15" fill="#9098A8"/>
<rect x="1454" y="1023" width="1" height="15" fill="#9098A8"/>
<g transform="translate(1181,1021)"><rect x="1" y="1" width="16" height="16" fill="#D0D0E0" stroke="#606070" stroke-width="1.2"/><path d="M4,8 A5,5 0 0 1 13,6 M14,10 A5,5 0 0 1 5,12" fill="none" stroke="#E04050" stroke-width="1.8"/></g>
<g transform="translate(1211,1021)"><rect x="0" y="0" width="18" height="18" fill="#F8DC70"/><circle cx="7" cy="6" r="4" fill="#E040E0"/><path d="M6,6 L16,16" stroke="#808080" stroke-width="2"/></g>
<g transform="translate(1242,1021)"><path d="M3,8 L9,3 L16,6 L10,10Z" fill="#E8A060" stroke="#805030" stroke-width="0.8"/><rect x="4" y="9" width="9" height="8" fill="#C8D8F0" stroke="#3060A0" stroke-width="0.8"/></g>
<g transform="translate(1274,1021)"><text x="3" y="15" font-size="17" font-weight="bold" font-family="Liberation Sans" fill="#4A70B8">?</text><ellipse cx="9" cy="17" rx="5" ry="1.3" fill="#8890A0"/></g>
<g transform="translate(1304,1021)"><rect x="4" y="1" width="8" height="7" fill="#5090E0" stroke="#204080" stroke-width="0.8"/><rect x="8" y="8" width="8" height="8" fill="#70A0B0" stroke="#203040" stroke-width="0.8"/><path d="M1,12 L8,12 M4,9 L8,12 L4,15" stroke="#E01010" stroke-width="1.8" fill="none"/></g>
<g transform="translate(1336,1021)"><rect x="0" y="0" width="18" height="18" fill="#F8DC70"/><polygon points="3,5 9,2 15,5 9,8" fill="#E040E0"/><polygon points="3,5 9,8 9,16 3,13" fill="#80B0B8" stroke="#3060C0" stroke-width="0.8"/><polygon points="15,5 9,8 9,16 15,13" fill="#90C0C0" stroke="#3060C0" stroke-width="0.8"/></g>
<g transform="translate(1367,1021)"><rect x="4" y="1" width="10" height="16" fill="#D8D8D0" stroke="#606860" stroke-width="1"/><rect x="5" y="5" width="8" height="3" fill="#E8A840"/><path d="M5,11 L13,11 M5,14 L13,14" stroke="#808080"/></g>
<g transform="translate(1398,1021)"><path d="M4,6 A6,6 0 1 0 9,3" fill="none" stroke="#20A020" stroke-width="2.2"/><polygon points="7,0 12,3 7,6" fill="#20A020"/><circle cx="9" cy="10" r="2" fill="#2040A0"/></g>
<g transform="translate(1429,1021)"><rect x="1" y="1" width="16" height="16" fill="none" stroke="#505860" stroke-width="1.5"/><path d="M9,1 L9,17 M1,9 L17,9" stroke="#505860" stroke-width="1.5"/></g>
<rect x="1748" y="794" width="156" height="70" rx="9" fill="#9CC4E0" stroke="#3A88C8" stroke-width="1"/>
<rect x="1731" y="799" width="172" height="59" rx="8" fill="#fff" stroke="#1878C8" stroke-width="1.5"/>
<path d="M1744,825 L1751,808 L1754,808 L1761,825 L1757.5,825 L1752.5,812 L1747.5,825Z M1748,820 L1757,820 L1756,817 L1749,817Z" fill="#000"/>
<circle cx="1781" cy="819" r="8" fill="#000"/><circle cx="1777" cy="815" r="7.5" fill="#fff"/>
<rect x="1747" y="838" width="2" height="4" fill="#000"/><rect x="1759" y="849" width="2" height="2" fill="#000"/>
<path d="M1772,838 L1790,838 L1790,844 L1785,844 L1785,852 L1777,852 L1777,844 L1772,844Z" fill="#000"/>
<circle cx="1894" cy="822" r="4.5" fill="#E01030"/>
<ellipse cx="1874" cy="848" rx="30" ry="19" fill="#1898E0" stroke="#303030" stroke-width="0.7"/>
<path d="M1890,842 Q1912,846 1917,860 Q1905,866 1890,862Z" fill="#fff" stroke="#303030" stroke-width="0.6"/>
<circle cx="1842" cy="830" r="32" fill="#1898E0" stroke="#303030" stroke-width="0.8"/>
<ellipse cx="1836" cy="836" rx="28" ry="24" fill="#fff" stroke="#303030" stroke-width="0.6"/>
<ellipse cx="1836" cy="803" rx="7.5" ry="8" fill="#fff" stroke="#303030" stroke-width="0.6"/><ellipse cx="1851" cy="810" rx="7" ry="8" fill="#fff" stroke="#303030" stroke-width="0.6"/>
<path d="M1832,806 Q1836,802 1840,805" fill="none" stroke="#000" stroke-width="1"/><circle cx="1848" cy="810" r="1.5" fill="#000"/>
<circle cx="1836" cy="815" r="4.5" fill="#E01020"/><circle cx="1835" cy="813.5" r="1.2" fill="#fff"/>
<path d="M1815,840 Q1836,856 1862,836" fill="none" stroke="#303030" stroke-width="0.7"/>
<path d="M1810,810 L1830,822 M1808,818 L1828,826 M1848,826 L1862,824 M1846,832 L1862,836 M1844,838 L1856,846 M1836,818 L1832,842" stroke="#505050" stroke-width="0.5"/>
<path d="M1820,852 Q1838,862 1862,846" fill="none" stroke="#D02020" stroke-width="2"/><circle cx="1833" cy="860" r="4" fill="#E8C020" stroke="#806010" stroke-width="0.6"/>
<ellipse cx="1848" cy="854" rx="9" ry="7" fill="#fff" stroke="#303030" stroke-width="0.6"/>
<ellipse cx="1815" cy="841" rx="6" ry="8" fill="#fff" stroke="#303030" stroke-width="0.6"/>
<circle cx="1813" cy="888" r="28.5" fill="#2A3248" stroke="#1A2030" stroke-width="1"/>
<path d="M1840,886 A27,27 0 0 1 1800,911" fill="none" stroke="url(#gauge)" stroke-width="2"/>
<path d="M1836,864 L1888,864 A19.5,19.5 0 0 1 1888,903.5 L1836,903.5" fill="#22283A"/>
<circle cx="1813" cy="888" r="26" fill="#2E364E"/>
<path d="M1836,874 A27,27 0 0 1 1800,912" fill="none" stroke="url(#gauge)" stroke-width="2"/>
<text x="1797" y="891" font-size="22" font-family="Liberation Sans" fill="#E8E8F0">59</text><text x="1824" y="892" font-size="9" font-family="Liberation Sans" fill="#E8E8F0">%</text>
<line x1="1842" y1="883.5" x2="1902" y2="883.5" stroke="#3A4258" stroke-width="1"/>
<path d="M1849,876 L1849,868 M1846,871 L1849,868 L1852,871" stroke="#50B0F0" stroke-width="1.2" fill="none"/>
<path d="M1849,890 L1849,898 M1846,895 L1849,898 L1852,895" stroke="#30C030" stroke-width="1.2" fill="none"/>
<text x="1871" y="876" font-size="11" font-weight="bold" font-family="Liberation Sans" fill="#E0E0E8">0</text><text x="1879" y="877" font-size="8" font-family="Liberation Sans" fill="#C0C0D0">K/s</text>
<text x="1871" y="898" font-size="11" font-weight="bold" font-family="Liberation Sans" fill="#E0E0E8">0</text><text x="1879" y="899" font-size="8" font-family="Liberation Sans" fill="#C0C0D0">K/s</text>
</svg>

<div class="a" style="left:2px;top:1020px;width:1918px;height:1px;background:#A0A0A0"></div>
<div class="a" style="left:0;top:1040px;width:1920px;height:8px;background:linear-gradient(90deg,#3A2C24 0%,#3C3026 40%,#4A4430 60%,#3E3428 100%)"></div>
<div class="a" style="left:345px;top:1040px;width:45px;height:8px;background:#5E5850"></div>
<div class="a" style="left:1337px;top:1003px;width:2px;height:15px;background-image:repeating-linear-gradient(#fff 0 2px,#A8AEC0 2px 4px)"></div>
<div class="a" style="left:1340px;top:1002px;width:133px;height:17px;background:#fff"></div>
<svg class="a" style="left:1459px;top:1003px" width="14" height="14"><circle cx="8" cy="6" r="4" fill="none" stroke="#3A60A0" stroke-width="1.5"/><line x1="5" y1="9" x2="1" y2="13" stroke="#3A60A0" stroke-width="1.8"/></svg>
<div class="a" style="left:1476px;top:1003px;width:2px;height:15px;background-image:repeating-linear-gradient(#fff 0 2px,#A8AEC0 2px 4px)"></div>
<div class="st" style="left:1486px;top:1004px">绝对 XY 上视图</div>
<div class="a" style="left:1592px;top:1003px;width:1px;height:15px;background:#A0A0A0"></div>
<div class="st" style="left:1601px;top:1004px">绝对视图</div>
<div class="a" style="left:1657px;top:1003px;width:2px;height:15px;background-image:repeating-linear-gradient(#fff 0 2px,#A8AEC0 2px 4px)"></div>
<div class="st" style="left:1668px;top:1004px;font-weight:bold">LAYER0</div>
<div class="a" style="left:1726px;top:1003px;width:1px;height:15px;background:#A0A0A0"></div>
<div class="a" style="left:1757px;top:1003px;width:1px;height:15px;background:#A0A0A0"></div>
<div class="a" style="left:1762px;top:1005px;width:32px;height:12px;background:#4A6A98"></div>
<div class="a" style="left:1800px;top:1003px;width:1px;height:15px;background:#A0A0A0"></div>
<div class="a" style="left:1805px;top:1005px;width:32px;height:12px;background:#4A6A98"></div>
<div class="a" style="left:1843px;top:1003px;width:1px;height:15px;background:#A0A0A0"></div>
<div class="a" style="left:1848px;top:1005px;width:32px;height:12px;background:#4A6A98"></div>
<div class="a" style="left:1886px;top:1003px;width:1px;height:15px;background:#A0A0A0"></div>
<svg class="a" style="left:1893px;top:1003px" width="14" height="14"><circle cx="7" cy="7" r="6" fill="#2060C0"/><path d="M3,4 Q6,2 7,6 Q5,9 8,11 L5,12 Q2,9 3,4Z M9,3 Q12,5 11,8 L9,7Z" fill="#30B030"/></svg>
<div class="st" style="left:1142px;top:1024px">拴牢</div>
<!--SB2-->
<div class="st" style="left:1463px;top:1024px">LS: 1.00 PS: 1.00</div>
<div class="a" style="left:1580px;top:1023px;width:1px;height:15px;background:#A0A0A0"></div>
<div class="st" style="left:1589px;top:1024px">单位: 毫米</div>
<div class="a" style="left:1654px;top:1023px;width:1px;height:15px;background:#A0A0A0"></div>
<div class="st" style="left:1662px;top:1024px;letter-spacing:0.3px">X = 0215.733</div><div class="st" style="left:1743px;top:1024px;color:#E01010;letter-spacing:0.3px">Y =-1312.839</div><div class="st" style="left:1825px;top:1024px;letter-spacing:0.3px">Z = 0000.000</div>

</body></html>
